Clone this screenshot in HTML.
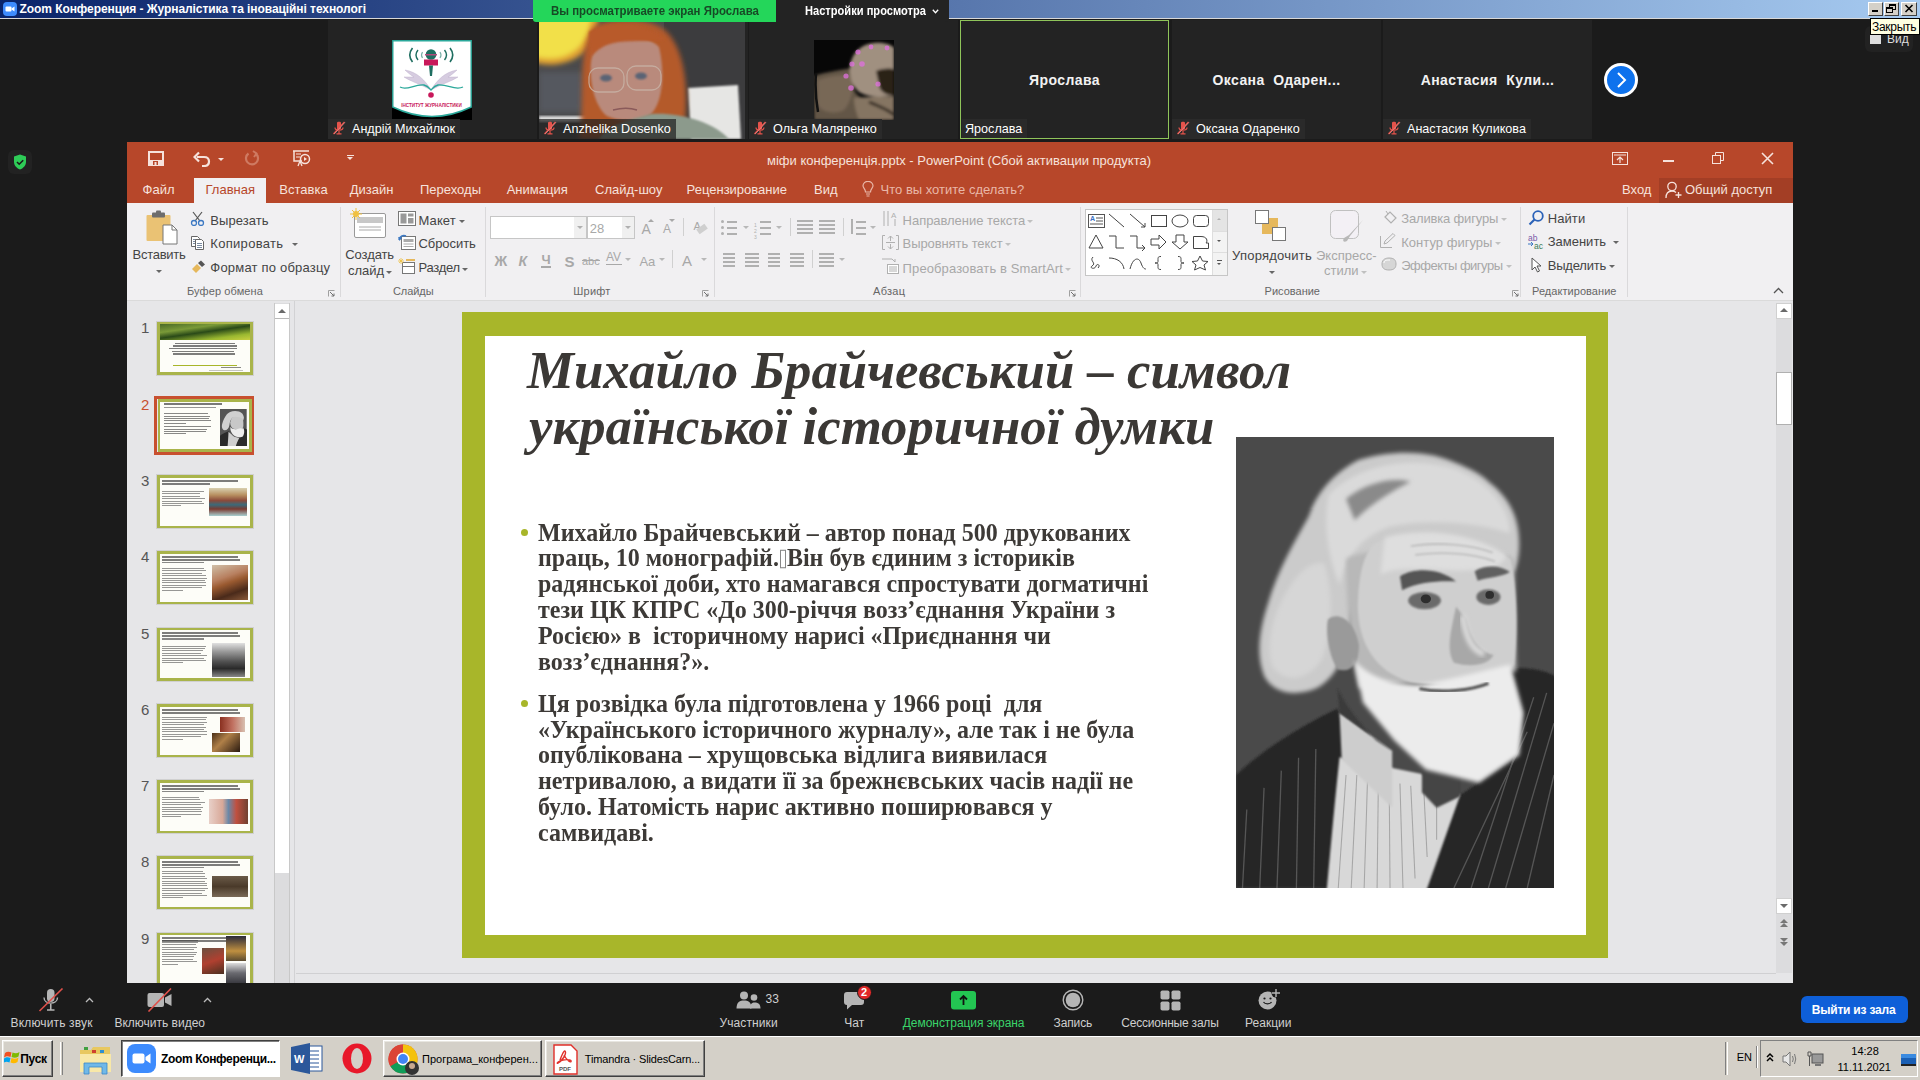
<!DOCTYPE html>
<html><head><meta charset="utf-8">
<style>
*{box-sizing:border-box;margin:0;padding:0}
html,body{width:1920px;height:1080px;overflow:hidden;background:#1b1b1b;font-family:"Liberation Sans",sans-serif;position:relative}
.a{position:absolute}
.t{position:absolute;white-space:nowrap;line-height:1}
/* title bar */
#tb{left:0;top:0;width:1920px;height:18px;background:linear-gradient(90deg,#0a246a 0%,#a6caf0 100%)}
#tbl{left:0;top:18px;width:1920px;height:1px;background:#d8d8d8}
/* tiles */
.tile{position:absolute;top:20px;height:119px;width:209px;background:#232323;overflow:hidden}
.lbl{position:absolute;left:0;bottom:0;height:20px;background:#2a2a2a;color:#fff;font-size:12.6px;line-height:20px;padding:0 5px 0 4px;white-space:nowrap}
.mute{display:inline-block;width:14px;height:14px;vertical-align:-2px;margin-right:6px}
.bn{position:absolute;left:0;right:0;top:52.7px;text-align:center;color:#f2f2f2;font-weight:bold;font-size:14px;letter-spacing:0.4px;white-space:nowrap;line-height:1}
/* ppt */
#ppt{left:127px;top:142px;width:1666px;height:841px;background:#e6e6e8;overflow:hidden}
#ptitle{left:0;top:0;width:1666px;height:35px;background:#b7472a}
#ptabs{left:0;top:35px;width:1666px;height:26px;background:#b7472a}
#ribbon{left:0;top:61px;width:1666px;height:98px;background:#f1f0f2;border-bottom:1px solid #dadada}
.tab{position:absolute;top:41px;color:#fbe9e4;font-size:13px;white-space:nowrap}
.rb{position:absolute;color:#444;font-size:13px;white-space:nowrap;line-height:1}
.gl{position:absolute;color:#666;font-size:12px;white-space:nowrap;line-height:1}
.sep{position:absolute;width:1px;background:#d9d8da}
/* zoom toolbar */
.zb{position:absolute;color:#d6d6d6;font-size:12px;white-space:nowrap;line-height:1}
/* taskbar */
#task{left:0;top:1036px;width:1920px;height:44px;background:#d4d0c8;border-top:1px solid #fff}
.tbtn{position:absolute;top:4px;height:37px;border:1px solid;border-color:#fff #404040 #404040 #fff;box-shadow:inset -1px -1px #808080;background:#d4d0c8;font-size:13px;color:#000;white-space:nowrap}
</style></head><body>

<!-- Windows title bar -->
<div class="a" id="tb"></div>
<div class="a" id="tbl"></div>


<!-- title bar content -->
<svg class="a" style="left:3px;top:2px" width="14" height="14" viewBox="0 0 14 14"><rect x="0" y="0" width="14" height="14" rx="4" fill="#3d8bfd"/><rect x="2.5" y="4.5" width="6" height="5" rx="1" fill="#fff"/><path d="M8.5,6.5 L11.5,4.5 V9.5 L8.5,7.5 Z" fill="#fff"/></svg>
<div class="t" style="left:19.5px;top:2.5px;font-size:12px;font-weight:bold;color:#fff;letter-spacing:-0.07px">Zoom Конференция - Журналістика та іноваційні технологі</div>
<!-- green banner -->
<div class="a" style="left:533px;top:0;width:243px;height:22px;background:#24d65a;border-bottom-left-radius:3px;z-index:5"></div>
<div class="t" style="z-index:6;left:551px;top:4px;font-size:13px;font-weight:bold;color:#174a26;transform:scaleX(0.88);transform-origin:0 0">Вы просматриваете экран Ярослава</div>
<div class="a" style="left:776px;top:0;width:173px;height:22px;background:#232323;border-bottom-right-radius:4px;z-index:5"></div>
<div class="t" style="z-index:6;left:805px;top:5px;font-size:12px;font-weight:bold;color:#fff;transform:scaleX(0.925);transform-origin:0 0">Настройки просмотра</div>
<svg class="a" style="left:932px;top:9px;z-index:6" width="7" height="5" viewBox="0 0 7 5"><path d="M0.8,0.8 L3.5,3.8 L6.2,0.8" fill="none" stroke="#fff" stroke-width="1.3"/></svg>
<!-- window buttons -->
<div class="a" style="left:1868px;top:2px;width:15px;height:14px;background:#d4d0c8;border:1px solid;border-color:#fff #404040 #404040 #fff"></div>
<div class="a" style="left:1872px;top:10px;width:6px;height:2px;background:#000"></div>
<div class="a" style="left:1884px;top:2px;width:15px;height:14px;background:#d4d0c8;border:1px solid;border-color:#fff #404040 #404040 #fff"></div>
<svg class="a" style="left:1886px;top:4px" width="10" height="9" viewBox="0 0 10 9"><rect x="3.5" y="0.5" width="6" height="5" fill="none" stroke="#000"/><path d="M3.5,1.5 H9.5" stroke="#000"/><rect x="0.5" y="3.5" width="6" height="5" fill="#d4d0c8" stroke="#000"/><path d="M0.5,4.5 H6.5" stroke="#000"/></svg>
<div class="a" style="left:1901px;top:2px;width:16px;height:14px;background:#d4d0c8;border:1px solid;border-color:#fff #404040 #404040 #fff"></div>
<svg class="a" style="left:1904px;top:4px" width="10" height="9" viewBox="0 0 10 9"><path d="M1.5,1 L8.5,8 M8.5,1 L1.5,8" stroke="#000" stroke-width="1.6"/></svg>
<!-- Вид -->
<div class="a" style="left:1865px;top:26px;width:48px;height:26px;background:#222;border-radius:6px"></div>
<div class="a" style="left:1870px;top:35px;width:11px;height:9px;background:#ddd"></div>
<div class="t" style="left:1887px;top:33px;font-size:12px;color:#ddd">Вид</div>
<!-- tooltip -->
<div class="a" style="left:1870px;top:18px;width:50px;height:17px;background:#ffffe1;border:1px solid #000"></div>
<div class="t" style="left:1872px;top:20.5px;font-size:12px;color:#000;letter-spacing:-0.3px">Закрыть</div>
<!-- next arrow -->
<svg class="a" style="left:1604px;top:63px" width="34" height="34" viewBox="0 0 34 34"><circle cx="17" cy="17" r="15.5" fill="#0e72ed" stroke="#fff" stroke-width="3"/><path d="M14,10 L21,17 L14,24" fill="none" stroke="#fff" stroke-width="2"/></svg>
<!-- shield -->
<div class="a" style="left:8px;top:150px;width:24px;height:24px;background:#222;border-radius:6px"></div>
<svg class="a" style="left:13px;top:154px" width="14" height="16" viewBox="0 0 14 16"><path d="M7,0.5 L13,2.5 V8 C13,11.5 10,14.5 7,15.5 C4,14.5 1,11.5 1,8 V2.5 Z" fill="#2ecc57"/><path d="M4,8 L6.2,10.2 L10.2,6.2" fill="none" stroke="#1a1a1a" stroke-width="1.6"/></svg>

<!-- Zoom participants strip -->
<div class="tile" style="left:328px"><svg class="a" style="left:64px;top:20px" width="80" height="80" viewBox="0 0 80 80"><rect width="80" height="80" fill="#000"/>
<path d="M0.8,0.8 H79.2 V67 Q40,86 0.8,67 Z" fill="#fff" stroke="#2aa89a" stroke-width="1.4"/>
<path d="M20.5,8 Q15,15 20.5,22" fill="none" stroke="#1e6e60" stroke-width="1.6"/><path d="M26,10 Q22,15 26,20" fill="none" stroke="#1e6e60" stroke-width="1.4"/><path d="M30.5,12 Q28.5,15 30.5,18" fill="none" stroke="#7ab0a8" stroke-width="1.2"/>
<path d="M58,8 Q63.5,15 58,22" fill="none" stroke="#1e6e60" stroke-width="1.6"/><path d="M52.5,10 Q56.5,15 52.5,20" fill="none" stroke="#1e6e60" stroke-width="1.4"/><path d="M48,12 Q50,15 48,18" fill="none" stroke="#7ab0a8" stroke-width="1.2"/>
<circle cx="39" cy="14.5" r="5.3" fill="#1e6e60"/><rect x="33" y="14" width="12" height="1.5" fill="#b04a7a"/>
<rect x="32" y="19.5" width="14" height="6" fill="#c8185a"/><path d="M37,25.5 H41 L40,36 H38 Z" fill="#1e6e60"/>
<path d="M39,50 C33,40 25,32 13,30 C16,33 20,36 22,37 C18,37 14,37 12,37 C18,41 28,44 39,50 Z" fill="#d6cce0" stroke="#b8a8c8" stroke-width="0.4"/>
<path d="M39,50 C45,40 53,32 65,30 C62,33 58,36 56,37 C60,37 64,37 66,37 C60,41 50,44 39,50 Z" fill="#d6cce0" stroke="#b8a8c8" stroke-width="0.4"/>
<path d="M8,47 C15,51 22,44 32,45 C36,46 38,49 39,50 C40,49 42,46 46,45 C56,44 63,51 71,47" fill="none" stroke="#2aa89a" stroke-width="1.3"/>
<circle cx="39" cy="55" r="2.8" fill="#c8185a"/>
<text x="39.5" y="67" font-size="4.6" font-weight="bold" fill="#c8185a" text-anchor="middle" font-family="Liberation Sans">ІНСТИТУТ ЖУРНАЛІСТИКИ</text>
</svg><div class="lbl"><svg class="mute" viewBox="0 0 14 14"><path d="M5,1.5 C5,0.5 9,0.5 9,1.5 V7.5 C9,9 5,9 5,7.5 Z" fill="#e5534b"/><path d="M3,6.5 C3,10 11,10 11,6.5" fill="none" stroke="#e5534b" stroke-width="1.2"/><path d="M7,10 V12.5 M4.5,12.8 H9.5" stroke="#e5534b" stroke-width="1.2"/><path d="M1.5,13 L12.5,1" stroke="#e5534b" stroke-width="1.4"/><path d="M2.2,13 L13,1.3" stroke="#f0b0b0" stroke-width="0.5"/></svg>Андрій Михайлюк</div></div>
<div class="tile" style="left:539px"><svg class="a" style="left:0;top:2px" width="206" height="117" viewBox="0 0 206 117"><defs><filter id="vb"><feGaussianBlur stdDeviation="2.5"/></filter><filter id="vb2"><feGaussianBlur stdDeviation="1.2"/></filter></defs>
<rect width="206" height="117" fill="#4a4a4c"/>
<rect x="125" y="0" width="81" height="117" fill="#3c3c3e"/>
<g filter="url(#vb)">
<path d="M-5,-5 L60,-5 C58,20 45,38 20,42 C8,44 0,42 -5,40 Z" fill="#e0a030"/>
<path d="M-5,-5 L52,-5 C50,16 40,32 18,36 C8,37 0,36 -5,34 Z" fill="#f2e048"/>
<rect x="0" y="50" width="45" height="40" fill="#5a5e66" opacity="0.7"/>
</g>
<path d="M0,94 L55,94 L55,100 L0,100 Z" fill="#d8d8d8" filter="url(#vb2)"/>
<path d="M149,66 L199,63 L202,117 L152,117 Z" fill="#e6e6e4" filter="url(#vb2)"/>
<path d="M40,117 C46,80 38,35 52,8 C62,-6 118,-8 132,15 C150,40 148,85 146,100 C140,112 130,117 130,117 Z" fill="#b45a2c" filter="url(#vb)"/>
<path d="M55,22 C70,12 105,10 120,25 C126,50 124,80 112,92 C100,100 80,100 68,94 C56,85 50,60 52,40 Z" fill="#b98a7c" filter="url(#vb2)"/>
<path d="M50,10 C65,0 110,0 126,18 C115,20 95,18 80,20 C65,22 58,28 52,35 Z" fill="#b85a2a" filter="url(#vb2)"/>
<rect x="50" y="46" width="35" height="24" rx="9" fill="none" stroke="#c8b4a8" stroke-width="1.3" opacity="0.8"/>
<rect x="88" y="44" width="34" height="24" rx="9" fill="none" stroke="#c8b4a8" stroke-width="1.3" opacity="0.8"/>
<ellipse cx="67" cy="56" rx="6" ry="3.5" fill="#5a6474" filter="url(#vb2)"/>
<ellipse cx="102" cy="54" rx="6" ry="3.5" fill="#5a6474" filter="url(#vb2)"/>
<path d="M74,88 C82,86 92,86 98,88" stroke="#8a5a5a" stroke-width="1.5" fill="none"/>
<path d="M60,117 C70,102 90,98 112,92 C140,90 175,100 190,117 Z" fill="#8c9a8c" filter="url(#vb2)"/>
</svg><div class="lbl" style="background:rgba(30,30,30,0.7)"><svg class="mute" viewBox="0 0 14 14"><path d="M5,1.5 C5,0.5 9,0.5 9,1.5 V7.5 C9,9 5,9 5,7.5 Z" fill="#e5534b"/><path d="M3,6.5 C3,10 11,10 11,6.5" fill="none" stroke="#e5534b" stroke-width="1.2"/><path d="M7,10 V12.5 M4.5,12.8 H9.5" stroke="#e5534b" stroke-width="1.2"/><path d="M1.5,13 L12.5,1" stroke="#e5534b" stroke-width="1.4"/><path d="M2.2,13 L13,1.3" stroke="#f0b0b0" stroke-width="0.5"/></svg>Anzhelika Dosenko</div></div>
<div class="tile" style="left:749px"><svg class="a" style="left:65px;top:20px" width="80" height="80" viewBox="0 0 80 80"><defs><filter id="ob"><feGaussianBlur stdDeviation="1.8"/></filter></defs>
<rect width="80" height="80" fill="#070707"/>
<g filter="url(#ob)">
<path d="M0,36 C12,32 28,30 38,28 L40,50 C45,60 55,62 80,58 L80,80 L0,80 Z" fill="#645646"/>
<path d="M4,40 C15,36 30,34 38,36 C40,48 38,60 30,70 C20,75 8,72 4,65 Z" fill="#786856"/>
<path d="M36,26 C38,12 48,4 60,3 C70,2 78,5 80,8 L80,55 C70,58 55,58 45,52 C38,46 35,36 36,26 Z" fill="#a09080"/>
<path d="M62,31 C70,28 78,28 80,30 L80,55 C75,56 70,54 66,49 Z" fill="#2a2018"/>
<path d="M40,58 C55,56 70,58 80,56 L80,80 L45,80 C42,72 40,65 40,58 Z" fill="#857562"/>
<path d="M55,62 C65,66 75,70 80,75" stroke="#3a3028" stroke-width="3" fill="none"/>
</g>
<path d="M2,34 C1,45 2,60 4,72" stroke="#111" stroke-width="2.5" fill="none"/>
<g fill="#e070e0" opacity="0.75"><circle cx="44" cy="12" r="2.6"/><circle cx="57" cy="7" r="2.4"/><circle cx="73" cy="8" r="2.4"/><circle cx="38" cy="24" r="2.6"/><circle cx="48" cy="24" r="2.8"/><circle cx="32" cy="36" r="2.6"/><circle cx="37" cy="48" r="2.8"/><circle cx="64" cy="44" r="2.6"/></g>
</svg><div class="lbl"><svg class="mute" viewBox="0 0 14 14"><path d="M5,1.5 C5,0.5 9,0.5 9,1.5 V7.5 C9,9 5,9 5,7.5 Z" fill="#e5534b"/><path d="M3,6.5 C3,10 11,10 11,6.5" fill="none" stroke="#e5534b" stroke-width="1.2"/><path d="M7,10 V12.5 M4.5,12.8 H9.5" stroke="#e5534b" stroke-width="1.2"/><path d="M1.5,13 L12.5,1" stroke="#e5534b" stroke-width="1.4"/><path d="M2.2,13 L13,1.3" stroke="#f0b0b0" stroke-width="0.5"/></svg>Ольга Маляренко</div></div>
<div class="tile" style="left:960px;border:1px solid #8fc45a;background:#232323"><div class="bn" style="top:51.7px">Ярослава</div><div class="lbl" style="left:1px;bottom:-1px;padding-left:3px;background:#2a2a2a">Ярослава</div></div>
<div class="tile" style="left:1172px"><div class="bn">Оксана&nbsp; Одарен...</div><div class="lbl"><svg class="mute" viewBox="0 0 14 14"><path d="M5,1.5 C5,0.5 9,0.5 9,1.5 V7.5 C9,9 5,9 5,7.5 Z" fill="#e5534b"/><path d="M3,6.5 C3,10 11,10 11,6.5" fill="none" stroke="#e5534b" stroke-width="1.2"/><path d="M7,10 V12.5 M4.5,12.8 H9.5" stroke="#e5534b" stroke-width="1.2"/><path d="M1.5,13 L12.5,1" stroke="#e5534b" stroke-width="1.4"/><path d="M2.2,13 L13,1.3" stroke="#f0b0b0" stroke-width="0.5"/></svg>Оксана Одаренко</div></div>
<div class="tile" style="left:1383px"><div class="bn">Анастасия&nbsp; Кули...</div><div class="lbl"><svg class="mute" viewBox="0 0 14 14"><path d="M5,1.5 C5,0.5 9,0.5 9,1.5 V7.5 C9,9 5,9 5,7.5 Z" fill="#e5534b"/><path d="M3,6.5 C3,10 11,10 11,6.5" fill="none" stroke="#e5534b" stroke-width="1.2"/><path d="M7,10 V12.5 M4.5,12.8 H9.5" stroke="#e5534b" stroke-width="1.2"/><path d="M1.5,13 L12.5,1" stroke="#e5534b" stroke-width="1.4"/><path d="M2.2,13 L13,1.3" stroke="#f0b0b0" stroke-width="0.5"/></svg>Анастасия Куликова</div></div>


<!-- PowerPoint -->
<div class="a" id="ppt">
  <div class="a" id="ptitle"></div>
  <div class="a" id="ptabs"></div>
  <div class="a" id="ribbon"></div>
</div>


<!-- PPT header -->
<svg class="a" style="left:148px;top:151px" width="16" height="15" viewBox="0 0 16 15"><path d="M1,1 H15 V14 H1 Z" fill="none" stroke="#f6e2dc" stroke-width="2"/><rect x="1" y="9" width="14" height="5" fill="#f6e2dc"/><rect x="5" y="10" width="5" height="4" fill="#b7472a"/><rect x="6.5" y="11" width="2" height="3" fill="#f6e2dc"/></svg>
<svg class="a" style="left:193px;top:150px" width="18" height="17" viewBox="0 0 18 17"><path d="M4,7 H11 C14.5,7 16,9 16,11.5 C16,14 14.5,16 11,16 H9" fill="none" stroke="#f6e2dc" stroke-width="2.2"/><path d="M6,2.5 L1.5,7 L6,11.5" fill="none" stroke="#f6e2dc" stroke-width="2.2"/></svg>
<div class="a" style="left:218px;top:158px;width:0;height:0;border-left:3px solid transparent;border-right:3px solid transparent;border-top:3px solid #f6e2dc"></div>

<svg class="a" style="left:244px;top:150px" width="16" height="16" viewBox="0 0 16 16"><path d="M11.5,3.5 A6,6 0 1 1 4.5,3.5" fill="none" stroke="#cf7a62" stroke-width="2.2"/><path d="M9,1 L12.5,3.5 L10,7" fill="none" stroke="#cf7a62" stroke-width="2"/></svg>
<svg class="a" style="left:292px;top:150px" width="19" height="17" viewBox="0 0 19 17"><path d="M1,1 H17" stroke="#f6e2dc" stroke-width="1.5"/><path d="M2,1 V11 H10" fill="none" stroke="#f6e2dc" stroke-width="1.5"/><path d="M4,4 H9 M4,7 H8" stroke="#f6e2dc" stroke-width="1.2"/><circle cx="13" cy="9" r="4.5" fill="none" stroke="#f6e2dc" stroke-width="1.5"/><path d="M12,7 L15,9 L12,11Z" fill="#f6e2dc"/><path d="M6,16 L8,11 L10,16" fill="none" stroke="#f6e2dc" stroke-width="1.3"/></svg>
<div class="a" style="left:347px;top:155px;width:7px;height:1px;background:#f6e2dc"></div>
<div class="a" style="left:347.0px;top:157px;width:0;height:0;border-left:3.5px solid transparent;border-right:3.5px solid transparent;border-top:3.5px solid #f6e2dc"></div>
<div class="t" style="left:767px;top:153.7px;font-size:13px;color:#f6e2dc;">міфи конференція.pptx - PowerPoint (Сбой активации продукта)</div>
<svg class="a" style="left:1612px;top:152px" width="16" height="13" viewBox="0 0 16 13"><rect x="0.5" y="0.5" width="15" height="12" fill="none" stroke="#f6e2dc"/><path d="M2,3 H14" stroke="#f6e2dc"/><path d="M8,11 V5 M5,8 L8,5 L11,8" fill="none" stroke="#f6e2dc" stroke-width="1.2"/></svg>
<div class="a" style="left:1663px;top:160px;width:11px;height:1.5px;background:#f6e2dc"></div>
<svg class="a" style="left:1712px;top:152px" width="12" height="12" viewBox="0 0 12 12"><rect x="0.5" y="3.5" width="8" height="8" fill="none" stroke="#f6e2dc"/><path d="M3.5,3.5 V0.5 H11.5 V8.5 H8.5" fill="none" stroke="#f6e2dc"/></svg>
<svg class="a" style="left:1761px;top:152px" width="13" height="13" viewBox="0 0 13 13"><path d="M1,1 L12,12 M12,1 L1,12" stroke="#f6e2dc" stroke-width="1.6"/></svg>
<div class="a" style="left:194px;top:178px;width:72px;height:25px;background:#f1f0f2"></div>
<div class="t" style="left:142.6px;top:183.2px;font-size:13px;color:#f6e2dc;">Файл</div>
<div class="t" style="left:279.3px;top:183.2px;font-size:13px;color:#f6e2dc;">Вставка</div>
<div class="t" style="left:349.7px;top:183.2px;font-size:13px;color:#f6e2dc;">Дизайн</div>
<div class="t" style="left:420px;top:183.2px;font-size:13px;color:#f6e2dc;">Переходы</div>
<div class="t" style="left:506.7px;top:183.2px;font-size:13px;color:#f6e2dc;">Анимация</div>
<div class="t" style="left:595px;top:183.2px;font-size:13px;color:#f6e2dc;">Слайд-шоу</div>
<div class="t" style="left:686.6px;top:183.2px;font-size:13px;color:#f6e2dc;">Рецензирование</div>
<div class="t" style="left:814px;top:183.2px;font-size:13px;color:#f6e2dc;">Вид</div>
<div class="t" style="left:205.5px;top:183.2px;font-size:13px;color:#b7472a;">Главная</div>
<svg class="a" style="left:862px;top:181px" width="12" height="17" viewBox="0 0 12 17"><path d="M3.5,11 C3.5,8 1,7 1,4.8 A5,4.5 0 0 1 11,4.8 C11,7 8.5,8 8.5,11 Z" fill="none" stroke="#e9b7a8" stroke-width="1.2"/><path d="M4,13 H8 M4.5,15 H7.5" stroke="#e9b7a8" stroke-width="1.2"/></svg>
<div class="t" style="left:880.6px;top:183.2px;font-size:13px;color:#e9b7a8;">Что вы хотите сделать?</div>
<div class="t" style="left:1622px;top:183.2px;font-size:13px;color:#f6e2dc;">Вход</div>
<div class="a" style="left:1659px;top:178px;width:134px;height:25px;background:#a33e25"></div>
<svg class="a" style="left:1665px;top:181px" width="18" height="18" viewBox="0 0 18 18"><circle cx="7" cy="5.5" r="4.2" fill="none" stroke="#f6e2dc" stroke-width="1.3"/><path d="M1,17 C1,12 3.5,10 7,10 C9,10 10,10.5 11,11.5" fill="none" stroke="#f6e2dc" stroke-width="1.3"/><path d="M13.5,11 V17 M10.5,14 H16.5" stroke="#f6e2dc" stroke-width="1.3"/></svg>
<div class="t" style="left:1685px;top:183.2px;font-size:13px;color:#f6e2dc;">Общий доступ</div>

<!-- ribbon -->
<svg class="a" style="left:146px;top:210px" width="32" height="35" viewBox="0 0 32 35"><rect x="0.5" y="5" width="24" height="26" rx="1" fill="#eac274"/><rect x="6" y="2.5" width="13" height="5" rx="1" fill="#6d6d6d"/><rect x="10" y="0.5" width="5" height="4" rx="1" fill="#6d6d6d"/><path d="M17,15 H26 L31,20 V34 H17 Z" fill="#fff" stroke="#777" stroke-width="1"/><path d="M26,15 V20 H31" fill="none" stroke="#777"/></svg>
<div class="t" style="left:132.5px;top:248.2px;font-size:13px;color:#444;letter-spacing:-0.26px">Вставить</div>
<div class="a" style="left:156.0px;top:269.5px;width:0;height:0;border-left:3px solid transparent;border-right:3px solid transparent;border-top:3px solid #666"></div>
<svg class="a" style="left:190px;top:211px" width="15" height="15" viewBox="0 0 15 15"><path d="M3,1 L10,10 M12,1 L5,10" stroke="#555" stroke-width="1.2"/><circle cx="4" cy="12" r="2.5" fill="none" stroke="#3b78c3" stroke-width="1.3"/><circle cx="11" cy="12" r="2.5" fill="none" stroke="#3b78c3" stroke-width="1.3"/></svg>
<div class="t" style="left:210.3px;top:213.6px;font-size:13px;color:#444;letter-spacing:0.05px">Вырезать</div>
<svg class="a" style="left:190px;top:235px" width="15" height="16" viewBox="0 0 15 16"><path d="M1.5,1.5 H7.5 L9.5,3.5 V11.5 H1.5 Z" fill="#fff" stroke="#666"/><path d="M3,4.5 H7 M3,6.5 H7 M3,8.5 H5" stroke="#7a8aa0"/><path d="M5.5,4.5 H11.5 L13.5,6.5 V14.5 H5.5 Z" fill="#fff" stroke="#666"/><path d="M7,8.5 H12 M7,10.5 H12 M7,12.5 H12" stroke="#7a8aa0"/></svg>
<div class="t" style="left:210.3px;top:237.0px;font-size:13px;color:#444;letter-spacing:0.3px">Копировать</div>
<div class="a" style="left:291.7px;top:242.5px;width:0;height:0;border-left:3px solid transparent;border-right:3px solid transparent;border-top:3px solid #666"></div>
<svg class="a" style="left:191px;top:260px" width="15" height="14" viewBox="0 0 15 14"><path d="M1,9 L6,4 L10,8 L5,13 Z" fill="#e6b85c"/><path d="M7,3 L10,0.5 L14,4.5 L11,7 Z" fill="#555"/></svg>
<div class="t" style="left:210.3px;top:261.4px;font-size:13px;color:#444;letter-spacing:0.2px">Формат по образцу</div>
<div class="t" style="left:187px;top:286.4px;font-size:11px;color:#666;letter-spacing:0.1px">Буфер обмена</div>
<svg class="a" style="left:328px;top:290px" width="7" height="7" viewBox="0 0 7 7"><path d="M0.5,6.5 V0.5 H6.5" fill="none" stroke="#a0a0a0"/><path d="M2,2 L6,6 M6,3.5 V6 H3.5" fill="none" stroke="#707070"/></svg>
<div class="a" style="left:340px;top:207px;width:1px;height:90px;background:#dad9db"></div>
<svg class="a" style="left:350px;top:208px" width="38" height="31" viewBox="0 0 38 31"><rect x="4.5" y="5.5" width="31" height="24" rx="1.5" fill="#fff" stroke="#999"/><rect x="7" y="9" width="26" height="6" fill="#c8c8c8"/><path d="M9,19 H31 M9,22 H31" stroke="#aaa"/><circle cx="6" cy="6" r="3" fill="#f0c040"/><path d="M6,0 V12 M0,6 H12 M2,2 L10,10 M10,2 L2,10" stroke="#f0c040" stroke-width="1"/></svg>
<div class="t" style="left:345.3px;top:248.2px;font-size:13px;color:#444;letter-spacing:-0.1px">Создать</div>
<div class="t" style="left:348px;top:264.2px;font-size:13px;color:#444;">слайд</div>
<div class="a" style="left:385.5px;top:270.5px;width:0;height:0;border-left:3px solid transparent;border-right:3px solid transparent;border-top:3px solid #666"></div>
<svg class="a" style="left:398px;top:211px" width="18" height="15" viewBox="0 0 18 15"><rect x="0.5" y="0.5" width="17" height="14" fill="#fff" stroke="#777"/><rect x="2.5" y="2.5" width="6" height="10" fill="#999"/><rect x="10" y="2.5" width="5.5" height="3" fill="#999"/><rect x="10" y="7" width="5.5" height="5.5" fill="#999"/></svg>
<div class="t" style="left:418.5px;top:213.6px;font-size:13px;color:#444;letter-spacing:0.1px">Макет</div>
<div class="a" style="left:458.6px;top:219.5px;width:0;height:0;border-left:3px solid transparent;border-right:3px solid transparent;border-top:3px solid #666"></div>
<svg class="a" style="left:398px;top:234px" width="18" height="16" viewBox="0 0 18 16"><rect x="3.5" y="2.5" width="14" height="13" fill="#fff" stroke="#777"/><rect x="5.5" y="5" width="10" height="3" fill="#aaa"/><path d="M5.5,10 H15.5 M5.5,12.5 H15.5" stroke="#aaa"/><path d="M1,6 A5,5 0 0 1 8,2" fill="none" stroke="#3b78c3" stroke-width="1.5"/><path d="M0,3 L1.5,7 L4,4" fill="#3b78c3"/></svg>
<div class="t" style="left:418.5px;top:237.0px;font-size:13px;color:#444;letter-spacing:-0.07px">Сбросить</div>
<svg class="a" style="left:398px;top:258px" width="18" height="16" viewBox="0 0 18 16"><rect x="4.5" y="4.5" width="12" height="11" fill="#fff" stroke="#777"/><path d="M4.5,8.5 H16.5" stroke="#777"/><rect x="8" y="1" width="9" height="2" fill="#e6b85c"/><path d="M3,0 V6 M0,3 H6 M1,1 L5,5 M5,1 L1,5" stroke="#f0c040" stroke-width="0.8"/></svg>
<div class="t" style="left:418.5px;top:261.4px;font-size:13px;color:#444;letter-spacing:-0.28px">Раздел</div>
<div class="a" style="left:462.3px;top:267.5px;width:0;height:0;border-left:3px solid transparent;border-right:3px solid transparent;border-top:3px solid #666"></div>
<div class="t" style="left:393px;top:286.4px;font-size:11px;color:#666;letter-spacing:-0.08px">Слайды</div>
<div class="a" style="left:485px;top:207px;width:1px;height:90px;background:#dad9db"></div>
<div class="a" style="left:490px;top:216px;width:97px;height:23px;background:#fff;border:1px solid #c6c6c6"></div>
<div class="a" style="left:574px;top:217px;width:12px;height:21px;background:#f0f0f0"></div>
<div class="a" style="left:577.0px;top:226.0px;width:0;height:0;border-left:3px solid transparent;border-right:3px solid transparent;border-top:3px solid #b0b0b0"></div>
<div class="a" style="left:587px;top:216px;width:48px;height:23px;background:#fff;border:1px solid #c6c6c6"></div>
<div class="a" style="left:622px;top:217px;width:12px;height:21px;background:#f0f0f0"></div>
<div class="a" style="left:625.0px;top:226.0px;width:0;height:0;border-left:3px solid transparent;border-right:3px solid transparent;border-top:3px solid #b0b0b0"></div>
<div class="t" style="left:589.8px;top:221.7px;font-size:13px;color:#a8a8a8;">28</div>
<div class="t" style="left:641.5px;top:221.7px;font-size:14px;color:#a8a8a8;">A</div>
<div class="a" style="left:648px;top:219px;width:0;height:0;border-left:3px solid transparent;border-right:3px solid transparent;border-bottom:3px solid #a8a8a8"></div>
<div class="t" style="left:663px;top:223.3px;font-size:12px;color:#a8a8a8;">A</div>
<div class="a" style="left:669px;top:219px;width:0;height:0;border-left:3px solid transparent;border-right:3px solid transparent;border-top:3px solid #a8a8a8"></div>
<div class="a" style="left:683px;top:218px;width:1px;height:18px;background:#d0d0d0"></div>
<div class="t" style="left:693.5px;top:220.9px;font-size:11px;color:#a8a8a8;">A</div>
<div class="a" style="left:697px;top:226px;width:10px;height:6px;background:#cfcfcf;transform:rotate(-35deg)"></div>
<div class="t" style="left:494.6px;top:254.4px;font-size:14px;color:#a8a8a8;font-weight:bold">Ж</div>
<div class="t" style="left:518.5px;top:254.4px;font-size:14px;color:#a8a8a8;font-weight:bold;font-style:italic">К</div>
<div class="t" style="left:541.5px;top:253.2px;font-size:13px;color:#a8a8a8;font-weight:bold">Ч</div>
<div class="a" style="left:541px;top:266px;width:10px;height:1.5px;background:#a8a8a8"></div>
<div class="t" style="left:564.4px;top:253.5px;font-size:15px;color:#a8a8a8;font-weight:bold">S</div>
<div class="t" style="left:582px;top:255.9px;font-size:11px;color:#a8a8a8;">abc</div>
<div class="a" style="left:582px;top:260px;width:18px;height:1px;background:#a8a8a8"></div>
<div class="t" style="left:606px;top:251.0px;font-size:12px;color:#a8a8a8;">AV</div>
<div class="a" style="left:606px;top:264px;width:16px;height:1px;background:#a8a8a8"></div>
<div class="a" style="left:625.0px;top:258.0px;width:0;height:0;border-left:3px solid transparent;border-right:3px solid transparent;border-top:3px solid #b8b8b8"></div>
<div class="t" style="left:639.4px;top:255.2px;font-size:13px;color:#a8a8a8;">Aa</div>
<div class="a" style="left:658.5px;top:258.0px;width:0;height:0;border-left:3px solid transparent;border-right:3px solid transparent;border-top:3px solid #b8b8b8"></div>
<div class="a" style="left:672px;top:250px;width:1px;height:18px;background:#d0d0d0"></div>
<div class="t" style="left:682px;top:252.5px;font-size:15px;color:#a8a8a8;">A</div>
<div class="a" style="left:701.0px;top:258.0px;width:0;height:0;border-left:3px solid transparent;border-right:3px solid transparent;border-top:3px solid #b8b8b8"></div>
<div class="t" style="left:573.3px;top:286.4px;font-size:11px;color:#666;letter-spacing:0.2px">Шрифт</div>
<svg class="a" style="left:702px;top:290px" width="7" height="7" viewBox="0 0 7 7"><path d="M0.5,6.5 V0.5 H6.5" fill="none" stroke="#a0a0a0"/><path d="M2,2 L6,6 M6,3.5 V6 H3.5" fill="none" stroke="#707070"/></svg>
<div class="a" style="left:714px;top:207px;width:1px;height:90px;background:#dad9db"></div>
<div class="a" style="left:721px;top:220px;width:3px;height:3px;border-radius:50%;background:#b0b0b0"></div>
<div class="a" style="left:721px;top:226px;width:3px;height:3px;border-radius:50%;background:#b0b0b0"></div>
<div class="a" style="left:721px;top:232px;width:3px;height:3px;border-radius:50%;background:#b0b0b0"></div>
<div class="a" style="left:727px;top:221px;width:10px;height:1.5px;background:#b0b0b0"></div>
<div class="a" style="left:727px;top:227px;width:10px;height:1.5px;background:#b0b0b0"></div>
<div class="a" style="left:727px;top:233px;width:10px;height:1.5px;background:#b0b0b0"></div>
<div class="a" style="left:742.6px;top:226.0px;width:0;height:0;border-left:3px solid transparent;border-right:3px solid transparent;border-top:3px solid #b8b8b8"></div>
<div class="a" style="left:760px;top:221px;width:11px;height:1.5px;background:#b0b0b0"></div>
<div class="a" style="left:760px;top:227px;width:11px;height:1.5px;background:#b0b0b0"></div>
<div class="a" style="left:760px;top:233px;width:11px;height:1.5px;background:#b0b0b0"></div>
<div class="t" style="left:754px;top:221.8px;font-size:5px;color:#b0b0b0;"><span style="font-size:5px;line-height:6px;display:block">1<br>2<br>3</span></div>
<div class="a" style="left:776.4px;top:226.0px;width:0;height:0;border-left:3px solid transparent;border-right:3px solid transparent;border-top:3px solid #b8b8b8"></div>
<div class="a" style="left:790px;top:218px;width:1px;height:18px;background:#d0d0d0"></div>
<div class="a" style="left:797px;top:220px;width:16px;height:1.5px;background:#b0b0b0"></div>
<div class="a" style="left:797px;top:224px;width:16px;height:1.5px;background:#b0b0b0"></div>
<div class="a" style="left:797px;top:228px;width:16px;height:1.5px;background:#b0b0b0"></div>
<div class="a" style="left:797px;top:232px;width:16px;height:1.5px;background:#b0b0b0"></div>
<div class="a" style="left:819px;top:220px;width:16px;height:1.5px;background:#b0b0b0"></div>
<div class="a" style="left:819px;top:224px;width:16px;height:1.5px;background:#b0b0b0"></div>
<div class="a" style="left:819px;top:228px;width:16px;height:1.5px;background:#b0b0b0"></div>
<div class="a" style="left:819px;top:232px;width:16px;height:1.5px;background:#b0b0b0"></div>
<div class="a" style="left:843px;top:218px;width:1px;height:18px;background:#d0d0d0"></div>
<div class="a" style="left:856px;top:221px;width:10px;height:1.5px;background:#b0b0b0"></div>
<div class="a" style="left:856px;top:227px;width:10px;height:1.5px;background:#b0b0b0"></div>
<div class="a" style="left:856px;top:233px;width:10px;height:1.5px;background:#b0b0b0"></div>
<div class="a" style="left:851px;top:219px;width:1.5px;height:15px;background:#b0b0b0"></div>
<div class="a" style="left:869.7px;top:226.0px;width:0;height:0;border-left:3px solid transparent;border-right:3px solid transparent;border-top:3px solid #b8b8b8"></div>
<div class="a" style="left:723px;top:253px;width:12px;height:1.5px;background:#b0b0b0"></div>
<div class="a" style="left:723px;top:257px;width:12px;height:1.5px;background:#b0b0b0"></div>
<div class="a" style="left:723px;top:261px;width:12px;height:1.5px;background:#b0b0b0"></div>
<div class="a" style="left:723px;top:265px;width:12px;height:1.5px;background:#b0b0b0"></div>
<div class="a" style="left:745px;top:253px;width:14px;height:1.5px;background:#b0b0b0"></div>
<div class="a" style="left:745px;top:257px;width:14px;height:1.5px;background:#b0b0b0"></div>
<div class="a" style="left:745px;top:261px;width:14px;height:1.5px;background:#b0b0b0"></div>
<div class="a" style="left:745px;top:265px;width:14px;height:1.5px;background:#b0b0b0"></div>
<div class="a" style="left:768px;top:253px;width:12px;height:1.5px;background:#b0b0b0"></div>
<div class="a" style="left:768px;top:257px;width:12px;height:1.5px;background:#b0b0b0"></div>
<div class="a" style="left:768px;top:261px;width:12px;height:1.5px;background:#b0b0b0"></div>
<div class="a" style="left:768px;top:265px;width:12px;height:1.5px;background:#b0b0b0"></div>
<div class="a" style="left:790px;top:253px;width:14px;height:1.5px;background:#b0b0b0"></div>
<div class="a" style="left:790px;top:257px;width:14px;height:1.5px;background:#b0b0b0"></div>
<div class="a" style="left:790px;top:261px;width:14px;height:1.5px;background:#b0b0b0"></div>
<div class="a" style="left:790px;top:265px;width:14px;height:1.5px;background:#b0b0b0"></div>
<div class="a" style="left:812px;top:250px;width:1px;height:18px;background:#d0d0d0"></div>
<div class="a" style="left:819px;top:253px;width:15px;height:1.5px;background:#b0b0b0"></div>
<div class="a" style="left:819px;top:257px;width:15px;height:1.5px;background:#b0b0b0"></div>
<div class="a" style="left:819px;top:261px;width:15px;height:1.5px;background:#b0b0b0"></div>
<div class="a" style="left:819px;top:265px;width:15px;height:1.5px;background:#b0b0b0"></div>
<div class="a" style="left:839.0px;top:258.0px;width:0;height:0;border-left:3px solid transparent;border-right:3px solid transparent;border-top:3px solid #b8b8b8"></div>
<svg class="a" style="left:882px;top:210px" width="17" height="17" viewBox="0 0 17 17"><path d="M2,1 V16 M6,1 V16" stroke="#b0b0b0"/><text x="9" y="8" font-size="8" fill="#b0b0b0" font-family="Liberation Sans">A</text><path d="M13,9 V16" stroke="#b0b0b0"/></svg>
<div class="t" style="left:902.6px;top:214.0px;font-size:13px;color:#a8a8a8;letter-spacing:-0.04px">Направление текста</div>
<div class="a" style="left:1027.3px;top:219.5px;width:0;height:0;border-left:3px solid transparent;border-right:3px solid transparent;border-top:3px solid #c0c0c0"></div>
<svg class="a" style="left:882px;top:235px" width="17" height="15" viewBox="0 0 17 15"><path d="M3,0.5 H0.5 V14.5 H3 M14,0.5 H16.5 V14.5 H14" fill="none" stroke="#b0b0b0"/><path d="M8.5,1 V6 M6,3.5 L8.5,1 L11,3.5 M8.5,9 V14 M6,11.5 L8.5,14 L11,11.5 M4,7.5 H13" fill="none" stroke="#b0b0b0"/></svg>
<div class="t" style="left:902.6px;top:236.7px;font-size:13px;color:#a8a8a8;letter-spacing:-0.09px">Выровнять текст</div>
<div class="a" style="left:1004.5px;top:242.5px;width:0;height:0;border-left:3px solid transparent;border-right:3px solid transparent;border-top:3px solid #c0c0c0"></div>
<svg class="a" style="left:882px;top:258px" width="17" height="16" viewBox="0 0 17 16"><path d="M0,1 H10 L13,4 V1" fill="none" stroke="#b0b0b0"/><rect x="5.5" y="6.5" width="11" height="9" fill="#fff" stroke="#b0b0b0"/><path d="M7,9 H15 M7,11 H15 M7,13 H15" stroke="#b0b0b0"/></svg>
<div class="t" style="left:902.6px;top:261.5px;font-size:13px;color:#a8a8a8;letter-spacing:0.11px">Преобразовать в SmartArt</div>
<div class="a" style="left:1064.5px;top:267.5px;width:0;height:0;border-left:3px solid transparent;border-right:3px solid transparent;border-top:3px solid #c0c0c0"></div>
<div class="t" style="left:873px;top:286.4px;font-size:11px;color:#666;letter-spacing:0.3px">Абзац</div>
<svg class="a" style="left:1069px;top:290px" width="7" height="7" viewBox="0 0 7 7"><path d="M0.5,6.5 V0.5 H6.5" fill="none" stroke="#a0a0a0"/><path d="M2,2 L6,6 M6,3.5 V6 H3.5" fill="none" stroke="#707070"/></svg>
<div class="a" style="left:1080px;top:207px;width:1px;height:90px;background:#dad9db"></div>
<div class="a" style="left:1085px;top:209px;width:143px;height:67px;background:#fff;border:1px solid #c6c6c6"></div>
<div class="a" style="left:1212px;top:210px;width:15px;height:65px;background:#f3f3f3;border-left:1px solid #dedede"></div>
<div class="a" style="left:1213px;top:210px;width:14px;height:21px;background:#e4e4e4"></div>
<div class="a" style="left:1212px;top:231px;width:15px;height:1px;background:#dedede"></div>
<div class="a" style="left:1212px;top:252px;width:15px;height:1px;background:#dedede"></div>
<div class="a" style="left:1217px;top:218px;width:0;height:0;border-left:2.5px solid transparent;border-right:2.5px solid transparent;border-bottom:2.5px solid #b0b0b0"></div>
<div class="a" style="left:1217.0px;top:240.0px;width:0;height:0;border-left:2.5px solid transparent;border-right:2.5px solid transparent;border-top:2.5px solid #555"></div>
<div class="a" style="left:1217px;top:260px;width:5px;height:1px;background:#555"></div>
<div class="a" style="left:1217.0px;top:263.0px;width:0;height:0;border-left:2.5px solid transparent;border-right:2.5px solid transparent;border-top:2.5px solid #555"></div>
<svg class="a" style="left:1087px;top:213px" width="124" height="58" viewBox="0 0 124 58" fill="none" stroke="#444" stroke-width="1">
<rect x="1.5" y="1.5" width="16" height="13" stroke="#555"/><text x="3" y="8" font-size="7" fill="#3b6fc3" stroke="none" font-family="Liberation Sans" font-weight="bold">A</text><path d="M9,5 H16 M9,8 H16 M3,11 H16" stroke="#555"/>
<path d="M22,1 L37,14"/>
<path d="M43,1 L58,14 M54,14 H58 V10"/>
<rect x="64.5" y="2.5" width="15" height="11"/>
<ellipse cx="93" cy="8" rx="8" ry="6"/>
<rect x="106.5" y="2.5" width="15" height="11" rx="3"/>
<path d="M2,35 L9,22 L16,35 Z"/>
<path d="M22,23 H29 V35 H37"/>
<path d="M43,23 H50 V35 H58 M55,32 L58,35 L55,38"/>
<path d="M64,26 H72 V22 L79,29 L72,36 V32 H64 Z"/>
<path d="M89,22 V29 H85 L93,36 L101,29 H97 V22 Z"/>
<path d="M106.5,23.5 H114 C120,23.5 121,28 119,30 H121.5 V35.5 H106.5 Z"/>
<path d="M6,44 C2,48 10,50 5,53 C2,55 8,57 9,53 C10,50 14,52 11,55"/>
<path d="M22,45 C30,45 36,49 37,56"/>
<path d="M43,56 C46,44 52,44 54,50 C56,56 58,56 59,56"/>
<path d="M74,43.5 C71,43.5 71,44.5 71,46.5 V48.5 C71,50 70,50 68,50 C70,50 71,50 71,51.5 V53.5 C71,55.5 71,56.5 74,56.5"/>
<path d="M91,43.5 C94,43.5 94,44.5 94,46.5 V48.5 C94,50 95,50 97,50 C95,50 94,50 94,51.5 V53.5 C94,55.5 94,56.5 91,56.5"/>
<path d="M113,43 L115.5,48 L121,48.5 L117,52 L118.5,57 L113,54.5 L107.5,57 L109,52 L105,48.5 L110.5,48 Z"/>
</svg>
<svg class="a" style="left:1255px;top:210px" width="32" height="31" viewBox="0 0 32 31"><rect x="7" y="8" width="16" height="16" fill="#e6b85c"/><rect x="0.5" y="0.5" width="13" height="13" fill="#fff" stroke="#777"/><rect x="17.5" y="17.5" width="13" height="13" fill="#fff" stroke="#777"/></svg>
<div class="t" style="left:1232px;top:248.6px;font-size:13px;color:#444;letter-spacing:0.24px">Упорядочить</div>
<div class="a" style="left:1268.5px;top:270.5px;width:0;height:0;border-left:3px solid transparent;border-right:3px solid transparent;border-top:3px solid #666"></div>
<svg class="a" style="left:1330px;top:210px" width="34" height="34" viewBox="0 0 34 34"><rect x="0.5" y="0.5" width="28" height="28" rx="5" fill="#f3f0f5" stroke="#c0c0c0"/><path d="M33,10 L20,26 L17,31 C14,33 12,31 14,28 L19,25 Z" fill="#b8b8b8"/></svg>
<div class="t" style="left:1316px;top:248.6px;font-size:13px;color:#a8a8a8;letter-spacing:0px">Экспресс-</div>
<div class="t" style="left:1324px;top:264.2px;font-size:13px;color:#a8a8a8;">стили</div>
<div class="a" style="left:1361.0px;top:270.5px;width:0;height:0;border-left:3px solid transparent;border-right:3px solid transparent;border-top:3px solid #c0c0c0"></div>
<svg class="a" style="left:1383px;top:210px" width="15" height="15" viewBox="0 0 15 15"><path d="M2,7 L7,2 L13,8 L8,13 Z" fill="none" stroke="#b0b0b0" stroke-width="1.2"/><path d="M5,4 L3,1" stroke="#b0b0b0"/></svg>
<div class="t" style="left:1401.2px;top:212.0px;font-size:13px;color:#a8a8a8;letter-spacing:-0.16px">Заливка фигуры</div>
<div class="a" style="left:1501.0px;top:217.5px;width:0;height:0;border-left:3px solid transparent;border-right:3px solid transparent;border-top:3px solid #c0c0c0"></div>
<svg class="a" style="left:1380px;top:233px" width="16" height="15" viewBox="0 0 16 15"><path d="M0.5,3 V14.5 H12" fill="none" stroke="#b0b0b0"/><path d="M4,11 L5,8 L13,0.5 L15,2.5 L7,10 Z" fill="none" stroke="#b0b0b0"/></svg>
<div class="t" style="left:1401.2px;top:235.7px;font-size:13px;color:#a8a8a8;letter-spacing:0.03px">Контур фигуры</div>
<div class="a" style="left:1495.0px;top:241.5px;width:0;height:0;border-left:3px solid transparent;border-right:3px solid transparent;border-top:3px solid #c0c0c0"></div>
<svg class="a" style="left:1381px;top:257px" width="16" height="14" viewBox="0 0 16 14"><path d="M1,7 C1,2 5,1 8,1 C13,1 15,3 15,7 C15,11 13,13 8,13 C3,13 1,11 1,7 Z" fill="#d6d6d6" stroke="#b0b0b0"/><path d="M3,6 C3,3 6,3 9,3" stroke="#fff" fill="none"/></svg>
<div class="t" style="left:1401.2px;top:258.5px;font-size:13px;color:#a8a8a8;letter-spacing:-0.5px">Эффекты фигуры</div>
<div class="a" style="left:1506.0px;top:264.5px;width:0;height:0;border-left:3px solid transparent;border-right:3px solid transparent;border-top:3px solid #c0c0c0"></div>
<div class="t" style="left:1264.6px;top:286.4px;font-size:11px;color:#666;letter-spacing:0px">Рисование</div>
<svg class="a" style="left:1512px;top:290px" width="7" height="7" viewBox="0 0 7 7"><path d="M0.5,6.5 V0.5 H6.5" fill="none" stroke="#a0a0a0"/><path d="M2,2 L6,6 M6,3.5 V6 H3.5" fill="none" stroke="#707070"/></svg>
<div class="a" style="left:1520px;top:207px;width:1px;height:90px;background:#dad9db"></div>
<svg class="a" style="left:1528px;top:210px" width="16" height="16" viewBox="0 0 16 16"><circle cx="10" cy="6" r="4.8" fill="none" stroke="#2b62b8" stroke-width="1.8"/><path d="M6.5,9.5 L1.5,14.5" stroke="#2b62b8" stroke-width="2.2"/></svg>
<div class="t" style="left:1547.7px;top:211.9px;font-size:13px;color:#444;letter-spacing:0.1px">Найти</div>
<svg class="a" style="left:1527px;top:234px" width="19" height="16" viewBox="0 0 19 16"><text x="1" y="7" font-size="8.5" fill="#7a5aa8" font-family="Liberation Sans">ab</text><text x="7" y="15" font-size="8.5" fill="#3c7d5a" font-family="Liberation Sans">ac</text><path d="M1,10 H6 M4,8 L6,10 L4,12" stroke="#3b78c3" fill="none"/></svg>
<div class="t" style="left:1547.7px;top:235.2px;font-size:13px;color:#444;letter-spacing:0px">Заменить</div>
<div class="a" style="left:1613.4px;top:241.0px;width:0;height:0;border-left:3px solid transparent;border-right:3px solid transparent;border-top:3px solid #666"></div>
<svg class="a" style="left:1531px;top:257px" width="11" height="16" viewBox="0 0 11 16"><path d="M1,1 V13 L4,10 L6.5,15 L8.5,14 L6,9 L10,9 Z" fill="#fff" stroke="#555"/></svg>
<div class="t" style="left:1547.7px;top:258.7px;font-size:13px;color:#444;letter-spacing:-0.2px">Выделить</div>
<div class="a" style="left:1608.7px;top:264.5px;width:0;height:0;border-left:3px solid transparent;border-right:3px solid transparent;border-top:3px solid #666"></div>
<div class="t" style="left:1532px;top:286.4px;font-size:11px;color:#666;letter-spacing:0.05px">Редактирование</div>
<div class="a" style="left:1627px;top:207px;width:1px;height:90px;background:#dad9db"></div>
<svg class="a" style="left:1773px;top:287px" width="11" height="7" viewBox="0 0 11 7"><path d="M1,6 L5.5,1.5 L10,6" fill="none" stroke="#555" stroke-width="1.3"/></svg>

<!-- ===== PPT main area ===== -->
<!-- thumbnails panel -->
<div class="a" style="left:127px;top:301px;width:167px;height:682px;background:#e6e6e8"></div>
<div class="a" style="left:294px;top:301px;width:1px;height:682px;background:#d2d2d4"></div>
<!-- thumbnails -->
<div class="a" style="left:127px;top:301px;width:147px;height:682px;overflow:hidden">
<div class="a" style="left:-127px;top:-301px;width:1920px;height:1080px">
<div class="a" style="left:156.0px;top:320.5px;width:97.5px;height:55.0px;background:#d0d0d0;"></div>
<div class="a" style="left:157.0px;top:321.5px;width:95.5px;height:53.0px;background:#a9b44a;"></div>
<div class="a" style="left:159.5px;top:324.0px;width:90.5px;height:48.0px;background:#fdfdf8;"></div>
<div class="t" style="left:141px;top:319.5px;font-size:15px;color:#555">1</div>
<div class="a" style="left:159.5px;top:324.0px;width:90.5px;height:16.0px;background:linear-gradient(172deg,#4a6a28 0%,#7a9a38 30%,#2a4a18 50%,#9ab830 78%,#c8d040 100%);"></div>
<div class="a" style="left:175.0px;top:342.5px;width:60.0px;height:1.5px;background:rgba(40,40,40,0.6);"></div>
<div class="a" style="left:173.0px;top:345.2px;width:64.0px;height:1.5px;background:rgba(40,40,40,0.6);"></div>
<div class="a" style="left:169.0px;top:347.9px;width:68.0px;height:1.5px;background:rgba(40,40,40,0.6);"></div>
<div class="a" style="left:172.0px;top:350.6px;width:62.0px;height:1.5px;background:rgba(40,40,40,0.6);"></div>
<div class="a" style="left:173.0px;top:353.3px;width:62.0px;height:1.5px;background:rgba(40,40,40,0.6);"></div>
<div class="a" style="left:173.0px;top:364.5px;width:64.0px;height:0.8px;background:#a8b62a;"></div>
<div class="a" style="left:221.0px;top:367.0px;width:20.0px;height:0.9px;background:rgba(60,60,60,0.6);"></div>
<div class="a" style="left:209.0px;top:370.0px;width:34.0px;height:0.8px;background:rgba(90,90,90,0.35);"></div>
<div class="a" style="left:153.8px;top:395.5px;width:100.7px;height:59.2px;background:#c8502f;"></div>
<div class="a" style="left:156.8px;top:398.5px;width:94.7px;height:53.2px;background:#e6e6e8;"></div>
<div class="a" style="left:157.5px;top:399.3px;width:94.0px;height:52.5px;background:#a9b44a;"></div>
<div class="a" style="left:160.0px;top:401.8px;width:89.0px;height:47.5px;background:#fdfdf8;"></div>
<div class="t" style="left:141px;top:397.3px;font-size:15px;color:#c8502f">2</div>
<div class="a" style="left:163.5px;top:402.8px;width:58.0px;height:2.0px;background:rgba(50,50,50,0.65);"></div>
<div class="a" style="left:163.5px;top:406.8px;width:52.0px;height:1.6px;background:rgba(50,50,50,0.5);"></div>
<div class="a" style="left:163.5px;top:413.3px;width:44.3px;height:1.1px;background:rgba(40,40,40,0.55);"></div>
<div class="a" style="left:163.5px;top:415.6px;width:46.6px;height:1.1px;background:rgba(40,40,40,0.55);"></div>
<div class="a" style="left:163.5px;top:417.9px;width:45.3px;height:1.1px;background:rgba(40,40,40,0.55);"></div>
<div class="a" style="left:163.5px;top:420.2px;width:47.0px;height:1.1px;background:rgba(40,40,40,0.55);"></div>
<div class="a" style="left:163.5px;top:422.5px;width:22.5px;height:1.1px;background:rgba(40,40,40,0.55);"></div>
<div class="a" style="left:163.5px;top:426.3px;width:47.2px;height:1.1px;background:rgba(40,40,40,0.55);"></div>
<div class="a" style="left:163.5px;top:428.6px;width:43.0px;height:1.1px;background:rgba(40,40,40,0.55);"></div>
<div class="a" style="left:163.5px;top:430.9px;width:42.6px;height:1.1px;background:rgba(40,40,40,0.55);"></div>
<div class="a" style="left:163.5px;top:433.2px;width:22.5px;height:1.1px;background:rgba(40,40,40,0.55);"></div>
<svg class="a" style="left:220.3px;top:409px" width="26.7" height="37" viewBox="15 17 737 1045" preserveAspectRatio="none"><rect x="15" y="17" width="737" height="1045" fill="#555"/><path d="M15,770 C90,720 180,670 270,640 L290,1062 L15,1062 Z" fill="#2a2a2a"/><path d="M640,560 C690,555 752,580 760,600 L760,1070 L430,1070 C470,960 510,880 560,820 Z" fill="#2c2c2c"/><path d="M250,660 C300,700 360,770 410,800 L545,835 C500,920 470,1000 450,1070 L225,1070 C235,960 245,800 250,660 Z" fill="#cfcfcf"/><path d="M200,175 C250,90 400,45 540,85 C620,110 670,180 675,260 C670,320 650,350 640,370 C600,300 470,250 360,265 C310,300 285,390 275,470 C260,560 220,620 140,620 C75,605 55,520 75,440 C100,340 150,250 200,175 Z" fill="#d0d0d0"/><path d="M340,255 C430,220 570,240 645,300 C665,380 665,470 655,540 C620,590 500,600 420,585 C330,560 295,480 300,390 Z" fill="#c8c8c8"/><path d="M300,520 C330,575 390,590 450,588 C520,575 600,555 665,560 C695,625 690,720 650,785 C610,825 520,825 450,795 C380,765 325,690 305,610 Z" fill="#ececec"/></svg>
<div class="a" style="left:156.0px;top:474.0px;width:97.5px;height:55.0px;background:#d0d0d0;"></div>
<div class="a" style="left:157.0px;top:475.0px;width:95.5px;height:53.0px;background:#a9b44a;"></div>
<div class="a" style="left:159.5px;top:477.5px;width:90.5px;height:48.0px;background:#fdfdf8;"></div>
<div class="t" style="left:141px;top:473.0px;font-size:15px;color:#555">3</div>
<div class="a" style="left:162.0px;top:479.8px;width:75.5px;height:1.8px;background:rgba(40,40,40,0.6);"></div>
<div class="a" style="left:162.0px;top:482.8px;width:48.0px;height:1.8px;background:rgba(40,40,40,0.6);"></div>
<div class="a" style="left:162.0px;top:491.0px;width:42.0px;height:1.0px;background:rgba(50,50,50,0.5);"></div>
<div class="a" style="left:162.0px;top:493.4px;width:38.2px;height:1.0px;background:rgba(50,50,50,0.5);"></div>
<div class="a" style="left:162.0px;top:495.8px;width:38.1px;height:1.0px;background:rgba(50,50,50,0.5);"></div>
<div class="a" style="left:162.0px;top:498.2px;width:43.0px;height:1.0px;background:rgba(50,50,50,0.5);"></div>
<div class="a" style="left:162.0px;top:500.6px;width:39.6px;height:1.0px;background:rgba(50,50,50,0.5);"></div>
<div class="a" style="left:162.0px;top:503.0px;width:41.9px;height:1.0px;background:rgba(50,50,50,0.5);"></div>
<div class="a" style="left:162.0px;top:505.4px;width:19.4px;height:1.0px;background:rgba(50,50,50,0.5);"></div>
<div class="a" style="left:209.0px;top:488.0px;width:38.0px;height:28.4px;background:linear-gradient(180deg,#d8d0b0 0%,#b89060 25%,#8a4a3a 45%,#3a6a7a 60%,#7a3a30 75%,#a8d0d0 100%);filter:blur(0.4px)"></div>
<div class="a" style="left:156.0px;top:550.0px;width:97.5px;height:55.0px;background:#d0d0d0;"></div>
<div class="a" style="left:157.0px;top:551.0px;width:95.5px;height:53.0px;background:#a9b44a;"></div>
<div class="a" style="left:159.5px;top:553.5px;width:90.5px;height:48.0px;background:#fdfdf8;"></div>
<div class="t" style="left:141px;top:549.0px;font-size:15px;color:#555">4</div>
<div class="a" style="left:162.0px;top:555.8px;width:75.5px;height:1.8px;background:rgba(40,40,40,0.6);"></div>
<div class="a" style="left:162.0px;top:558.8px;width:77.5px;height:1.8px;background:rgba(40,40,40,0.6);"></div>
<div class="a" style="left:162.0px;top:561.8px;width:42.0px;height:1.6px;background:rgba(40,40,40,0.55);"></div>
<div class="a" style="left:162.0px;top:568.0px;width:42.4px;height:1.0px;background:rgba(50,50,50,0.5);"></div>
<div class="a" style="left:162.0px;top:570.4px;width:43.5px;height:1.0px;background:rgba(50,50,50,0.5);"></div>
<div class="a" style="left:162.0px;top:572.8px;width:40.1px;height:1.0px;background:rgba(50,50,50,0.5);"></div>
<div class="a" style="left:162.0px;top:575.2px;width:43.5px;height:1.0px;background:rgba(50,50,50,0.5);"></div>
<div class="a" style="left:162.0px;top:577.6px;width:45.1px;height:1.0px;background:rgba(50,50,50,0.5);"></div>
<div class="a" style="left:162.0px;top:580.0px;width:42.7px;height:1.0px;background:rgba(50,50,50,0.5);"></div>
<div class="a" style="left:162.0px;top:582.4px;width:44.2px;height:1.0px;background:rgba(50,50,50,0.5);"></div>
<div class="a" style="left:162.0px;top:584.8px;width:43.7px;height:1.0px;background:rgba(50,50,50,0.5);"></div>
<div class="a" style="left:162.0px;top:587.2px;width:39.5px;height:1.0px;background:rgba(50,50,50,0.5);"></div>
<div class="a" style="left:162.0px;top:589.6px;width:20.7px;height:1.0px;background:rgba(50,50,50,0.5);"></div>
<div class="a" style="left:212.0px;top:565.0px;width:35.5px;height:34.5px;background:linear-gradient(160deg,#d0c0a8 0%,#b88060 35%,#9a5a30 50%,#4a2a1a 75%,#8a5a3a 100%);filter:blur(0.4px)"></div>
<div class="a" style="left:156.0px;top:626.5px;width:97.5px;height:55.0px;background:#d0d0d0;"></div>
<div class="a" style="left:157.0px;top:627.5px;width:95.5px;height:53.0px;background:#a9b44a;"></div>
<div class="a" style="left:159.5px;top:630.0px;width:90.5px;height:48.0px;background:#fdfdf8;"></div>
<div class="t" style="left:141px;top:625.5px;font-size:15px;color:#555">5</div>
<div class="a" style="left:162.0px;top:632.3px;width:75.5px;height:1.8px;background:rgba(40,40,40,0.6);"></div>
<div class="a" style="left:162.0px;top:635.3px;width:77.5px;height:1.8px;background:rgba(40,40,40,0.6);"></div>
<div class="a" style="left:162.0px;top:638.3px;width:42.0px;height:1.6px;background:rgba(40,40,40,0.55);"></div>
<div class="a" style="left:162.0px;top:645.5px;width:44.3px;height:1.0px;background:rgba(50,50,50,0.5);"></div>
<div class="a" style="left:162.0px;top:647.9px;width:43.2px;height:1.0px;background:rgba(50,50,50,0.5);"></div>
<div class="a" style="left:162.0px;top:650.3px;width:41.2px;height:1.0px;background:rgba(50,50,50,0.5);"></div>
<div class="a" style="left:162.0px;top:652.7px;width:39.3px;height:1.0px;background:rgba(50,50,50,0.5);"></div>
<div class="a" style="left:162.0px;top:655.1px;width:45.1px;height:1.0px;background:rgba(50,50,50,0.5);"></div>
<div class="a" style="left:162.0px;top:657.5px;width:42.4px;height:1.0px;background:rgba(50,50,50,0.5);"></div>
<div class="a" style="left:162.0px;top:659.9px;width:44.1px;height:1.0px;background:rgba(50,50,50,0.5);"></div>
<div class="a" style="left:162.0px;top:662.3px;width:20.7px;height:1.0px;background:rgba(50,50,50,0.5);"></div>
<div class="a" style="left:212.0px;top:643.0px;width:33.0px;height:33.5px;background:linear-gradient(180deg,#e0e0e0 0%,#9a9a9a 25%,#505050 55%,#2a2a2a 75%,#888 100%);filter:blur(0.4px)"></div>
<div class="a" style="left:156.0px;top:703.0px;width:97.5px;height:55.0px;background:#d0d0d0;"></div>
<div class="a" style="left:157.0px;top:704.0px;width:95.5px;height:53.0px;background:#a9b44a;"></div>
<div class="a" style="left:159.5px;top:706.5px;width:90.5px;height:48.0px;background:#fdfdf8;"></div>
<div class="t" style="left:141px;top:702.0px;font-size:15px;color:#555">6</div>
<div class="a" style="left:162.0px;top:708.8px;width:75.5px;height:1.8px;background:rgba(40,40,40,0.6);"></div>
<div class="a" style="left:162.0px;top:711.8px;width:77.5px;height:1.8px;background:rgba(40,40,40,0.6);"></div>
<div class="a" style="left:162.0px;top:717.0px;width:44.8px;height:1.0px;background:rgba(50,50,50,0.5);"></div>
<div class="a" style="left:162.0px;top:719.4px;width:43.6px;height:1.0px;background:rgba(50,50,50,0.5);"></div>
<div class="a" style="left:162.0px;top:721.8px;width:45.1px;height:1.0px;background:rgba(50,50,50,0.5);"></div>
<div class="a" style="left:162.0px;top:724.2px;width:41.5px;height:1.0px;background:rgba(50,50,50,0.5);"></div>
<div class="a" style="left:162.0px;top:726.6px;width:44.2px;height:1.0px;background:rgba(50,50,50,0.5);"></div>
<div class="a" style="left:162.0px;top:729.0px;width:41.8px;height:1.0px;background:rgba(50,50,50,0.5);"></div>
<div class="a" style="left:162.0px;top:731.4px;width:45.2px;height:1.0px;background:rgba(50,50,50,0.5);"></div>
<div class="a" style="left:162.0px;top:733.8px;width:44.8px;height:1.0px;background:rgba(50,50,50,0.5);"></div>
<div class="a" style="left:162.0px;top:736.2px;width:39.4px;height:1.0px;background:rgba(50,50,50,0.5);"></div>
<div class="a" style="left:162.0px;top:738.6px;width:20.5px;height:1.0px;background:rgba(50,50,50,0.5);"></div>
<div class="a" style="left:219.7px;top:717.0px;width:25.3px;height:15.0px;background:linear-gradient(90deg,#8a3020,#c07060 50%,#d8c0b0);filter:blur(0.4px)"></div>
<div class="a" style="left:211.6px;top:732.6px;width:28.4px;height:19.0px;background:linear-gradient(135deg,#4a3018,#b08048 40%,#2a1a10);filter:blur(0.4px)"></div>
<div class="a" style="left:156.0px;top:779.0px;width:97.5px;height:55.0px;background:#d0d0d0;"></div>
<div class="a" style="left:157.0px;top:780.0px;width:95.5px;height:53.0px;background:#a9b44a;"></div>
<div class="a" style="left:159.5px;top:782.5px;width:90.5px;height:48.0px;background:#fdfdf8;"></div>
<div class="t" style="left:141px;top:778.0px;font-size:15px;color:#555">7</div>
<div class="a" style="left:162.0px;top:784.8px;width:75.5px;height:1.8px;background:rgba(40,40,40,0.6);"></div>
<div class="a" style="left:162.0px;top:787.8px;width:77.5px;height:1.8px;background:rgba(40,40,40,0.6);"></div>
<div class="a" style="left:162.0px;top:790.8px;width:42.0px;height:1.6px;background:rgba(40,40,40,0.55);"></div>
<div class="a" style="left:162.0px;top:797.0px;width:37.4px;height:1.0px;background:rgba(50,50,50,0.5);"></div>
<div class="a" style="left:162.0px;top:799.4px;width:37.9px;height:1.0px;background:rgba(50,50,50,0.5);"></div>
<div class="a" style="left:162.0px;top:801.8px;width:42.8px;height:1.0px;background:rgba(50,50,50,0.5);"></div>
<div class="a" style="left:162.0px;top:804.2px;width:39.4px;height:1.0px;background:rgba(50,50,50,0.5);"></div>
<div class="a" style="left:162.0px;top:806.6px;width:40.6px;height:1.0px;background:rgba(50,50,50,0.5);"></div>
<div class="a" style="left:162.0px;top:809.0px;width:38.5px;height:1.0px;background:rgba(50,50,50,0.5);"></div>
<div class="a" style="left:162.0px;top:811.4px;width:39.8px;height:1.0px;background:rgba(50,50,50,0.5);"></div>
<div class="a" style="left:162.0px;top:813.8px;width:39.0px;height:1.0px;background:rgba(50,50,50,0.5);"></div>
<div class="a" style="left:162.0px;top:816.2px;width:19.4px;height:1.0px;background:rgba(50,50,50,0.5);"></div>
<div class="a" style="left:209.0px;top:799.0px;width:39.0px;height:24.5px;background:linear-gradient(90deg,#e8d0c8 0%,#d8a898 35%,#6a88a8 50%,#c05040 70%,#704030 100%);filter:blur(0.4px)"></div>
<div class="a" style="left:156.0px;top:855.0px;width:97.5px;height:55.0px;background:#d0d0d0;"></div>
<div class="a" style="left:157.0px;top:856.0px;width:95.5px;height:53.0px;background:#a9b44a;"></div>
<div class="a" style="left:159.5px;top:858.5px;width:90.5px;height:48.0px;background:#fdfdf8;"></div>
<div class="t" style="left:141px;top:854.0px;font-size:15px;color:#555">8</div>
<div class="a" style="left:162.0px;top:860.8px;width:75.5px;height:1.8px;background:rgba(40,40,40,0.6);"></div>
<div class="a" style="left:162.0px;top:863.8px;width:77.5px;height:1.8px;background:rgba(40,40,40,0.6);"></div>
<div class="a" style="left:162.0px;top:866.8px;width:42.0px;height:1.6px;background:rgba(40,40,40,0.55);"></div>
<div class="a" style="left:162.0px;top:871.0px;width:41.2px;height:1.0px;background:rgba(50,50,50,0.5);"></div>
<div class="a" style="left:162.0px;top:873.4px;width:42.8px;height:1.0px;background:rgba(50,50,50,0.5);"></div>
<div class="a" style="left:162.0px;top:875.8px;width:42.8px;height:1.0px;background:rgba(50,50,50,0.5);"></div>
<div class="a" style="left:162.0px;top:878.2px;width:44.9px;height:1.0px;background:rgba(50,50,50,0.5);"></div>
<div class="a" style="left:162.0px;top:880.6px;width:43.4px;height:1.0px;background:rgba(50,50,50,0.5);"></div>
<div class="a" style="left:162.0px;top:883.0px;width:45.1px;height:1.0px;background:rgba(50,50,50,0.5);"></div>
<div class="a" style="left:162.0px;top:885.4px;width:44.6px;height:1.0px;background:rgba(50,50,50,0.5);"></div>
<div class="a" style="left:162.0px;top:887.8px;width:45.5px;height:1.0px;background:rgba(50,50,50,0.5);"></div>
<div class="a" style="left:162.0px;top:890.2px;width:43.4px;height:1.0px;background:rgba(50,50,50,0.5);"></div>
<div class="a" style="left:162.0px;top:892.6px;width:39.9px;height:1.0px;background:rgba(50,50,50,0.5);"></div>
<div class="a" style="left:162.0px;top:895.0px;width:44.6px;height:1.0px;background:rgba(50,50,50,0.5);"></div>
<div class="a" style="left:162.0px;top:897.4px;width:20.5px;height:1.0px;background:rgba(50,50,50,0.5);"></div>
<div class="a" style="left:211.6px;top:875.6px;width:36.4px;height:21.4px;background:linear-gradient(180deg,#6a5a48,#4a3a2a 50%,#7a6a58);filter:blur(0.4px)"></div>
<div class="a" style="left:156.0px;top:931.5px;width:97.5px;height:55.0px;background:#d0d0d0;"></div>
<div class="a" style="left:157.0px;top:932.5px;width:95.5px;height:53.0px;background:#a9b44a;"></div>
<div class="a" style="left:159.5px;top:935.0px;width:90.5px;height:48.0px;background:#fdfdf8;"></div>
<div class="t" style="left:141px;top:930.5px;font-size:15px;color:#555">9</div>
<div class="a" style="left:162.0px;top:937.3px;width:75.5px;height:1.8px;background:rgba(40,40,40,0.6);"></div>
<div class="a" style="left:162.0px;top:940.3px;width:77.5px;height:1.8px;background:rgba(40,40,40,0.6);"></div>
<div class="a" style="left:162.0px;top:939.5px;width:35.8px;height:1.0px;background:rgba(50,50,50,0.5);"></div>
<div class="a" style="left:162.0px;top:941.9px;width:35.5px;height:1.0px;background:rgba(50,50,50,0.5);"></div>
<div class="a" style="left:162.0px;top:944.3px;width:33.7px;height:1.0px;background:rgba(50,50,50,0.5);"></div>
<div class="a" style="left:162.0px;top:946.7px;width:34.5px;height:1.0px;background:rgba(50,50,50,0.5);"></div>
<div class="a" style="left:162.0px;top:949.1px;width:31.7px;height:1.0px;background:rgba(50,50,50,0.5);"></div>
<div class="a" style="left:162.0px;top:951.5px;width:35.1px;height:1.0px;background:rgba(50,50,50,0.5);"></div>
<div class="a" style="left:162.0px;top:953.9px;width:33.7px;height:1.0px;background:rgba(50,50,50,0.5);"></div>
<div class="a" style="left:162.0px;top:956.3px;width:32.1px;height:1.0px;background:rgba(50,50,50,0.5);"></div>
<div class="a" style="left:162.0px;top:958.7px;width:30.9px;height:1.0px;background:rgba(50,50,50,0.5);"></div>
<div class="a" style="left:162.0px;top:961.1px;width:35.2px;height:1.0px;background:rgba(50,50,50,0.5);"></div>
<div class="a" style="left:162.0px;top:963.5px;width:16.2px;height:1.0px;background:rgba(50,50,50,0.5);"></div>
<div class="a" style="left:226.0px;top:936.4px;width:19.8px;height:24.6px;background:linear-gradient(180deg,#2a2a3a,#c09040 60%,#5a4a30);filter:blur(0.4px)"></div>
<div class="a" style="left:202.0px;top:947.7px;width:21.7px;height:26.3px;background:linear-gradient(160deg,#6a5040,#b04030 50%,#4a3020);filter:blur(0.4px)"></div>
<div class="a" style="left:226.0px;top:963.0px;width:20.0px;height:20.0px;background:linear-gradient(180deg,#ddd,#6a6a70 50%,#3a3a40);filter:blur(0.4px)"></div>
</div></div>
<!-- thumb scrollbar -->
<div class="a" style="left:274px;top:303px;width:16px;height:680px;background:#dcdcde;border-left:1px solid #c8c8c8;border-right:1px solid #c8c8c8"></div>
<div class="a" style="left:275px;top:304px;width:14px;height:569px;background:#fff"></div>
<div class="a" style="left:275px;top:318px;width:14px;height:1px;background:#b8b8b8"></div>
<div class="a" style="left:278px;top:309px;width:0;height:0;border-left:4px solid transparent;border-right:4px solid transparent;border-bottom:4px solid #6a6a6a"></div>

<!-- slide -->
<div class="a" style="left:462px;top:312px;width:1146px;height:646px;background:#a8b62a"></div>
<div class="a" style="left:485px;top:336px;width:1101px;height:599px;background:#fff"></div>
<div class="a" style="left:296px;top:973px;width:1480px;height:1px;background:#d0d0d2"></div>

<!-- right scrollbar -->
<div class="a" style="left:1776px;top:303px;width:16px;height:670px;background:#dcdcde"></div>
<div class="a" style="left:1776px;top:303px;width:16px;height:16px;background:#fff;border:1px solid #d0d0d0"></div>
<div class="a" style="left:1780px;top:308px;width:0;height:0;border-left:4px solid transparent;border-right:4px solid transparent;border-bottom:4px solid #6a6a6a"></div>
<div class="a" style="left:1776px;top:372px;width:16px;height:53px;background:#fff;border:1px solid #b0b0b0"></div>
<div class="a" style="left:1776px;top:898px;width:16px;height:16px;background:#fff;border:1px solid #d0d0d0"></div>
<div class="a" style="left:1780px;top:904px;width:0;height:0;border-left:4px solid transparent;border-right:4px solid transparent;border-top:4px solid #6a6a6a"></div>
<svg class="a" style="left:1779px;top:918px" width="10" height="30" viewBox="0 0 10 30"><path d="M1,5 L5,1 L9,5Z M1,9 L5,5 L9,9Z" fill="#777"/><path d="M1,20 L5,24 L9,20Z M1,24 L5,28 L9,24Z" fill="#777"/></svg>
<div class="a" style="left:1776px;top:973px;width:16px;height:10px;background:#e6e6e8"></div>

<!-- slide title -->
<div class="t" id="st1" style="left:527px;top:344px;font-family:'Liberation Serif',serif;font-weight:bold;font-style:italic;font-size:52.8px;color:#3b3835">Михайло Брайчевський – символ</div>
<div class="t" id="st2" style="left:529px;top:400px;font-family:'Liberation Serif',serif;font-weight:bold;font-style:italic;font-size:52.8px;color:#3b3835">української історичної думки</div>

<!-- bullets -->
<div class="a" style="left:521px;top:529px;width:7px;height:7px;border-radius:50%;background:#a8b62a"></div>
<div class="a" style="left:521px;top:700px;width:7px;height:7px;border-radius:50%;background:#a8b62a"></div>
<div id="body" style="position:absolute;left:538px;top:0;font-family:'Liberation Serif',serif;font-weight:bold;font-size:24px;color:#3d3a37;line-height:1">
<div class="t" style="top:520.5px;transform:scaleY(1.09);transform-origin:0 19px">Михайло Брайчевський – автор понад 500 друкованих</div>
<div class="t" style="top:546.3px;transform:scaleY(1.09);transform-origin:0 19px">праць, 10 монографій.<span style="display:inline-block;width:6px;height:17px;border:1px solid #888;vertical-align:-2px;margin:0 1px"></span>Він був єдиним з істориків</div>
<div class="t" style="top:572.1px;transform:scaleY(1.09);transform-origin:0 19px">радянської доби, хто намагався спростувати догматичні</div>
<div class="t" style="top:597.9px;transform:scaleY(1.09);transform-origin:0 19px">тези ЦК КПРС «До 300-річчя возз’єднання України з</div>
<div class="t" style="top:623.7px;transform:scaleY(1.09);transform-origin:0 19px">Росією» в&nbsp; історичному нарисі «Приєднання чи</div>
<div class="t" style="top:649.5px;transform:scaleY(1.09);transform-origin:0 19px">возз’єднання?».</div>
<div class="t" style="top:691.7px;transform:scaleY(1.09);transform-origin:0 19px">Ця розвідка була підготовлена у 1966 році&nbsp; для</div>
<div class="t" style="top:717.5px;transform:scaleY(1.09);transform-origin:0 19px">«Українського історичного журналу», але так і не була</div>
<div class="t" style="top:743.3px;transform:scaleY(1.09);transform-origin:0 19px">опублікована – хрущовська відлига виявилася</div>
<div class="t" style="top:769.1px;transform:scaleY(1.09);transform-origin:0 19px">нетривалою, а видати її за брежнєвських часів надії не</div>
<div class="t" style="top:794.9px;transform:scaleY(1.09);transform-origin:0 19px">було. Натомість нарис активно поширювався у</div>
<div class="t" style="top:820.7px;transform:scaleY(1.09);transform-origin:0 19px">самвидаві.</div>
</div>
<!-- PHOTO -->
<svg class="a" style="left:1236px;top:437px" width="318" height="451" viewBox="15 17 737 1045" preserveAspectRatio="none">
<defs>
<filter id="bl" x="-10%" y="-10%" width="120%" height="120%"><feGaussianBlur stdDeviation="5"/></filter>
<filter id="bl2" x="-10%" y="-10%" width="120%" height="120%"><feGaussianBlur stdDeviation="2.5"/></filter>
<clipPath id="pc"><rect x="15" y="17" width="737" height="1045"/></clipPath>
</defs>
<g clip-path="url(#pc)">
<rect x="15" y="17" width="737" height="1045" fill="#4a4a4a"/>
<!-- jacket left -->
<path d="M15,800 C80,740 160,690 250,646 L290,760 L300,1062 L15,1062 Z" fill="#262626" filter="url(#bl2)"/>
<!-- jacket right -->
<path d="M651,553 C700,550 740,560 760,575 L760,1070 L455,1070 L534,847 L578,818 L671,754 L681,656 Z" fill="#262626" filter="url(#bl2)"/>
<g stroke="#707070" stroke-width="3" opacity="0.65" fill="none">
<path d="M735,610 L600,1062"/><path d="M752,680 L640,1062"/><path d="M752,800 L690,1062"/><path d="M705,620 L560,1062"/><path d="M690,700 L520,1062"/>
<path d="M40,880 L30,1062"/><path d="M80,830 L70,1062"/><path d="M120,790 L110,1062"/><path d="M160,760 L155,1062"/><path d="M200,740 L195,1062"/>
</g>
<!-- shirt -->
<path d="M255,759 L446,798 L534,847 L455,1070 L225,1070 C235,960 245,850 255,759 Z" fill="#d8d8d8" filter="url(#bl2)"/>
<g stroke="#9a9a9a" stroke-width="2.5" opacity="0.8">
<path d="M270,800 L252,1062"/><path d="M295,800 L282,1062"/><path d="M320,805 L312,1062"/><path d="M345,810 L342,1062"/><path d="M370,815 L372,1062"/><path d="M395,820 L402,1062"/><path d="M420,825 L430,1040"/><path d="M450,830 L458,990"/><path d="M480,840 L480,950"/>
</g>
<!-- collar -->
<path d="M255,656 L377,744 L377,876 L260,764 Z" fill="#cdcdcd" filter="url(#bl2)"/>
<path d="M446,778 L534,790 L534,850 L480,876 L446,840 Z" fill="#444" filter="url(#bl2)"/>
<!-- neck shadow -->
<path d="M250,600 C270,640 300,680 340,720 L377,744 L255,656 Z" fill="#3a3a3a" filter="url(#bl2)"/>
<!-- hair -->
<path d="M184,200 C200,150 240,100 300,70 C360,50 430,50 474,60 C530,75 580,100 600,120 C640,150 665,190 670,240 C675,290 665,320 657,331 C620,300 560,280 500,275 C430,270 370,280 340,300 C300,340 285,400 280,460 C270,530 240,580 200,600 C150,620 100,610 80,570 C60,520 70,460 90,400 C110,330 150,260 184,200 Z" fill="#cbcbcb" filter="url(#bl)"/>
<path d="M230,150 C300,80 420,60 520,90 C600,120 650,180 650,240 C580,215 460,205 370,225 C300,250 270,300 255,360 C230,300 215,220 230,150 Z" fill="#dadada" filter="url(#bl)"/>
<path d="M270,160 C320,120 380,110 420,120 C380,140 330,170 290,210 Z" fill="#8a8a8a" filter="url(#bl)"/>
<path d="M110,420 C140,350 180,300 220,310 C240,380 240,460 215,530 C185,580 130,590 100,550 C85,510 95,460 110,420 Z" fill="#d6d6d6" filter="url(#bl)"/>
<!-- face base -->
<path d="M270,300 C300,270 600,260 660,300 L665,560 L300,600 C280,520 270,400 270,300 Z" fill="#b8b8b8" filter="url(#bl)"/>
<!-- face -->
<path d="M335,265 C420,225 560,235 652,300 C668,380 668,470 660,545 C620,590 500,600 420,585 C330,560 292,480 298,390 C302,320 315,285 335,265 Z" fill="#cfcfcf" filter="url(#bl2)"/>
<path d="M360,250 C450,225 570,240 640,290 C640,320 580,330 500,325 C430,320 380,320 350,335 Z" fill="#dedede" filter="url(#bl)"/>
<g stroke="#a0a0a0" stroke-width="3" fill="none" opacity="0.7" filter="url(#bl2)"><path d="M420,270 C480,260 560,265 610,285"/><path d="M430,290 C490,282 560,285 615,305"/></g>
<!-- eyebrows / eyes -->
<path d="M395,340 C430,318 490,322 525,352 C490,350 440,352 400,372 Z" fill="#555" filter="url(#bl2)"/>
<path d="M568,328 C595,312 630,315 650,330 C630,342 600,342 575,350 Z" fill="#606060" filter="url(#bl2)"/>
<ellipse cx="452" cy="396" rx="38" ry="20" fill="#6a6a6a" filter="url(#bl2)"/>
<ellipse cx="600" cy="388" rx="28" ry="18" fill="#6a6a6a" filter="url(#bl2)"/>
<ellipse cx="455" cy="392" rx="12" ry="10" fill="#2e2e2e"/>
<ellipse cx="603" cy="383" rx="10" ry="9" fill="#2e2e2e"/>
<!-- nose -->
<path d="M525,410 C515,460 500,510 520,540 C560,552 600,545 612,522 C590,518 560,498 548,440 Z" fill="#a8a8a8" filter="url(#bl2)"/>
<path d="M540,430 C548,480 560,510 590,520" stroke="#dcdcdc" stroke-width="14" fill="none" filter="url(#bl)"/>
<!-- ear / cheek shadow -->
<path d="M228,440 C250,420 290,440 300,500 C300,545 280,565 250,555 C230,525 222,470 228,440 Z" fill="#9a9a9a" filter="url(#bl2)"/>
<!-- beard -->
<path d="M289,534 C330,580 390,592 450,590 C520,578 600,555 651,545 L681,656 L671,754 L578,818 L455,788 L382,720 L309,632 Z" fill="#ececec" filter="url(#bl)"/>
<path d="M440,600 C490,612 560,604 600,588" stroke="#4a4a4a" stroke-width="7" fill="none" filter="url(#bl2)"/>
</g>
</svg>


<!-- Zoom toolbar -->
<svg class="a" style="left:38px;top:988px" width="26" height="24" viewBox="0 0 26 24"><rect x="9" y="1" width="7.5" height="13" rx="3.75" fill="#b5b5b5"/><path d="M6,9.5 C6,17 19.5,17 19.5,9.5" fill="none" stroke="#b5b5b5" stroke-width="1.4"/><path d="M12.75,16 V21.5 M9,22 H16.5" stroke="#b5b5b5" stroke-width="1.6"/><path d="M1.5,23 L24.5,0.5" stroke="#e0504a" stroke-width="1.6"/></svg>
<svg class="a" style="left:85px;top:997px" width="9" height="6" viewBox="0 0 9 6"><path d="M1,5 L4.5,1.5 L8,5" fill="none" stroke="#bbb" stroke-width="1.3"/></svg>
<svg class="a" style="left:147px;top:988px" width="26" height="24" viewBox="0 0 26 24"><rect x="0.5" y="5" width="16.5" height="14" rx="2" fill="#b5b5b5"/><path d="M18,9.5 L24.5,6 V18 L18,14.5 Z" fill="#b5b5b5"/><path d="M1.5,23.5 L24,0.5" stroke="#e0504a" stroke-width="1.6"/></svg>
<svg class="a" style="left:202.5px;top:997px" width="9" height="6" viewBox="0 0 9 6"><path d="M1,5 L4.5,1.5 L8,5" fill="none" stroke="#bbb" stroke-width="1.3"/></svg>
<div class="t" style="left:10.6px;top:1017.0px;font-size:12px;color:#cfcfcf;letter-spacing:0.15px">Включить звук</div>
<div class="t" style="left:114.4px;top:1017.0px;font-size:12px;color:#cfcfcf;letter-spacing:0px">Включить видео</div>
<svg class="a" style="left:736px;top:991px" width="26" height="18" viewBox="0 0 26 18"><circle cx="8" cy="4.5" r="4" fill="#b5b5b5"/><path d="M0.5,17.5 C0.5,11 4,9.5 8,9.5 C12,9.5 15.5,11 15.5,17.5 Z" fill="#b5b5b5"/><circle cx="18" cy="6.5" r="3.3" fill="#b5b5b5"/><path d="M14,17.5 C14,13 16,11.5 18.5,11.5 C22,11.5 24.5,13 24.5,17.5 Z" fill="#b5b5b5"/></svg>
<div class="t" style="left:765.5px;top:992.5px;font-size:12px;color:#cfcfcf;">33</div>
<div class="t" style="left:719.5px;top:1017.0px;font-size:12px;color:#cfcfcf;letter-spacing:0.1px">Участники</div>
<svg class="a" style="left:843px;top:991px" width="22" height="19" viewBox="0 0 22 19"><path d="M4,1 H18 C20,1 21,2 21,4 V11 C21,13 20,14 18,14 H9 L4,18.5 V14 H4 C2,14 1,13 1,11 V4 C1,2 2,1 4,1 Z" fill="#b5b5b5"/></svg>
<div class="a" style="left:857px;top:985px;width:15px;height:15px;border-radius:50%;background:#e02828;border:1px solid #1a1a1a"></div>
<div class="t" style="left:861px;top:987px;font-size:11px;font-weight:bold;color:#fff">2</div>
<div class="t" style="left:844.3px;top:1017.0px;font-size:12px;color:#cfcfcf;">Чат</div>
<svg class="a" style="left:950.5px;top:990.5px" width="25" height="19" viewBox="0 0 25 19"><rect x="0" y="0" width="25" height="18.5" rx="3" fill="#23c552"/><path d="M12.5,14 V5.5 M9,8.5 L12.5,5 L16,8.5" fill="none" stroke="#111" stroke-width="1.8"/></svg>
<div class="t" style="left:902.8px;top:1017.0px;font-size:12px;color:#3ad46a;letter-spacing:-0.05px">Демонстрация экрана</div>
<svg class="a" style="left:1062px;top:989px" width="22" height="22" viewBox="0 0 22 22"><circle cx="11" cy="11" r="9.8" fill="none" stroke="#b5b5b5" stroke-width="1.4"/><circle cx="11" cy="11" r="7.3" fill="#b5b5b5"/></svg>
<div class="t" style="left:1053.5px;top:1017.0px;font-size:12px;color:#cfcfcf;letter-spacing:-0.1px">Запись</div>
<svg class="a" style="left:1159.5px;top:989.5px" width="21" height="21" viewBox="0 0 21 21"><rect x="0.5" y="0.5" width="9" height="9" rx="1.8" fill="#b5b5b5"/><rect x="11.5" y="0.5" width="9" height="9" rx="1.8" fill="#b5b5b5"/><rect x="0.5" y="11.5" width="9" height="9" rx="1.8" fill="#b5b5b5"/><rect x="11.5" y="11.5" width="9" height="9" rx="1.8" fill="#b5b5b5"/></svg>
<div class="t" style="left:1121.2px;top:1017.0px;font-size:12px;color:#cfcfcf;letter-spacing:-0.2px">Сессионные залы</div>
<svg class="a" style="left:1258px;top:988px" width="23" height="22" viewBox="0 0 23 22"><circle cx="9.5" cy="12.5" r="9" fill="#b5b5b5"/><circle cx="6.5" cy="10.5" r="1.1" fill="#1a1a1a"/><circle cx="12.5" cy="10.5" r="1.1" fill="#1a1a1a"/><path d="M5.5,14 C7,16.5 12,16.5 13.5,14" fill="none" stroke="#1a1a1a" stroke-width="1.2"/><circle cx="18" cy="5" r="4.5" fill="#1a1a1a"/><path d="M18,1 V9 M14,5 H22" stroke="#b5b5b5" stroke-width="1.4"/></svg>
<div class="t" style="left:1245.1px;top:1017.0px;font-size:12px;color:#cfcfcf;letter-spacing:0px">Реакции</div>
<div class="a" style="left:1801px;top:996px;width:107px;height:27px;background:#0e5fd8;border-radius:6px"></div>
<div class="t" style="left:1811.7px;top:1003.5px;font-size:12px;color:#fff;font-weight:bold;letter-spacing:-0.2px">Выйти из зала</div>


<!-- Taskbar -->
<div class="a" id="task"></div>
<div class="a" style="left:2px;top:1040px;width:51px;height:37px;border:1px solid;border-color:#fff #404040 #404040 #fff;box-shadow:inset -1px -1px #808080, inset 1px 1px #e8e6e0;background:#d4d0c8"></div>
<svg class="a" style="left:4px;top:1050px" width="16" height="15" viewBox="0 0 16 15"><path d="M1,3 C3,1.5 5,1.5 7.5,2.5 L6.5,7 C4,6 2.5,6 0,7.5 Z" fill="#f25022"/><path d="M8.5,2.5 C11,3.5 13,3.5 15.5,2 L14.5,6.5 C12,8 10,8 7.5,7 Z" fill="#7fba00"/><path d="M0,8.5 C2.5,7 4,7 6.5,8 L5.5,12.5 C3,11.5 1.5,11.5 -1,13 Z" fill="#00a4ef"/><path d="M7.5,8 C10,9 12,9 14.5,7.5 L13.5,12 C11,13.5 9,13.5 6.5,12.5 Z" fill="#ffb900"/></svg>
<div class="t" style="left:20.3px;top:1053.0px;font-size:12px;color:#000;font-weight:bold;letter-spacing:-0.3px">Пуск</div>
<div class="a" style="left:60px;top:1042px;width:3px;height:33px;border-left:1px solid #fff;border-right:1px solid #808080"></div>
<svg class="a" style="left:79px;top:1045px" width="33" height="30" viewBox="0 0 33 30"><path d="M1,5 H12 L14,2 H31 V26 H1 Z" fill="#e8c860"/><rect x="5" y="2" width="4" height="3" fill="#40a040"/><rect x="13" y="5" width="4" height="3" fill="#d04030"/><rect x="21" y="5" width="4" height="3" fill="#3090d0"/><path d="M1,9 H32 V27 H1 Z" fill="#f8e8a8"/><path d="M5,29 V18 H28 V29 H23 V22 H10 V29 Z" fill="#70b8e8" stroke="#3a88c8" stroke-width="0.8"/></svg>
<div class="a" style="left:121px;top:1040px;width:159px;height:37px;border:1px solid;border-color:#404040 #fff #fff #404040;box-shadow:inset 1px 1px #808080;background:#fff"></div>
<svg class="a" style="left:126.5px;top:1044px" width="29" height="29" viewBox="0 0 29 29"><rect width="29" height="29" rx="8" fill="#3d8bfd"/><rect x="5.5" y="9.5" width="12" height="10" rx="2" fill="#fff"/><path d="M18.5,13 L23.5,9.5 V19.5 L18.5,16 Z" fill="#fff"/></svg>
<div class="t" style="left:161px;top:1053.0px;font-size:12px;color:#000;font-weight:bold;letter-spacing:-0.35px">Zoom Конференци...</div>
<svg class="a" style="left:291px;top:1043px" width="32" height="31" viewBox="0 0 32 31"><rect x="14" y="3" width="17" height="25" fill="#fff" stroke="#2b579a"/><path d="M17,8 H28 M17,12 H28 M17,16 H28 M17,20 H28 M17,24 H28" stroke="#2b579a"/><path d="M0,4 L19,0 V31 L0,27 Z" fill="#2b579a"/><text x="3" y="20" font-size="11" font-weight="bold" fill="#fff" font-family="Liberation Sans">W</text></svg>
<svg class="a" style="left:342px;top:1043px" width="30" height="31" viewBox="0 0 30 31"><ellipse cx="15" cy="15.5" rx="14.5" ry="15" fill="#e8182a"/><ellipse cx="15" cy="15.5" rx="6" ry="10.5" fill="#d4d0c8"/></svg>
<div class="a" style="left:383px;top:1040px;width:159px;height:37px;border:1px solid;border-color:#fff #404040 #404040 #fff;box-shadow:inset -1px -1px #808080, inset 1px 1px #e8e6e0;background:#d4d0c8"></div>
<svg class="a" style="left:387.5px;top:1043.5px" width="32" height="31" viewBox="0 0 32 31"><circle cx="15" cy="15" r="14.5" fill="#db4437"/><path d="M15,15 L2.4,22.3 A14.5,14.5 0 0 1 15,0.5 Z" fill="#db4437"/><path d="M15,15 L27.6,22.3 A14.5,14.5 0 0 1 2.4,22.3 Z" fill="#0f9d58"/><path d="M15,15 L15,0.5 A14.5,14.5 0 0 1 27.6,22.3 Z" fill="#f4c20d"/><circle cx="15" cy="15" r="6.5" fill="#fff"/><circle cx="15" cy="15" r="5" fill="#4285f4"/><circle cx="24" cy="24" r="7" fill="#333"/><circle cx="24" cy="22" r="3" fill="#c8a890"/></svg>
<div class="t" style="left:422px;top:1053.9px;font-size:11px;color:#000;letter-spacing:0px">Програма_конферен...</div>
<div class="a" style="left:544.5px;top:1040px;width:160.5px;height:37px;border:1px solid;border-color:#fff #404040 #404040 #fff;box-shadow:inset -1px -1px #808080, inset 1px 1px #e8e6e0;background:#d4d0c8"></div>
<svg class="a" style="left:552.5px;top:1043.5px" width="25" height="31" viewBox="0 0 25 31"><path d="M1,1 H18 L24,7 V30 H1 Z" fill="#fff" stroke="#e0302a" stroke-width="1.4"/><path d="M7,16 C10,8 12,5 12.5,8 C13,11 8,18 5,19 C3,20 5,17 10,16 C15,15 19,16 18,17.5 C17,19 13,15 11,11" fill="none" stroke="#e0302a" stroke-width="1.4"/><text x="6" y="27" font-size="6" font-weight="bold" fill="#555" font-family="Liberation Sans">PDF</text></svg>
<div class="t" style="left:584.8px;top:1053.9px;font-size:11px;color:#000;letter-spacing:-0.15px">Timandra · SlidesCarn...</div>
<div class="a" style="left:1725px;top:1042px;width:3px;height:33px;border-left:1px solid #808080;border-right:1px solid #fff"></div>
<div class="t" style="left:1736.7px;top:1051.9px;font-size:11px;color:#000;;letter-spacing:0px">EN</div>
<div class="a" style="left:1756px;top:1046px;width:2px;height:22px;border-left:1px solid #808080;border-right:1px solid #fff"></div>
<div class="a" style="left:1760px;top:1040px;width:158px;height:37px;border:1px solid;border-color:#808080 #fff #fff #808080"></div>
<svg class="a" style="left:1766px;top:1052px" width="8" height="10" viewBox="0 0 8 10"><path d="M1,5 L4,2 L7,5 M1,9 L4,6 L7,9" fill="none" stroke="#000" stroke-width="1.5"/></svg>
<svg class="a" style="left:1782px;top:1051px" width="17" height="16" viewBox="0 0 17 16"><path d="M1,5 H4 L8,1 V15 L4,11 H1 Z" fill="#e8e8e8" stroke="#777"/><path d="M10.5,5 Q12,8 10.5,11 M12.5,3 Q15,8 12.5,13" fill="none" stroke="#777" stroke-width="1"/></svg>
<svg class="a" style="left:1807px;top:1051px" width="17" height="16" viewBox="0 0 17 16"><rect x="5" y="3" width="11" height="9" fill="#999" stroke="#555"/><rect x="8" y="13" width="6" height="2" fill="#777"/><path d="M1,1 H4 V5 H1 Z M2.5,5 V15" fill="none" stroke="#555"/></svg>
<div class="t" style="left:1851.3px;top:1045.9px;font-size:11px;color:#000;;letter-spacing:0px">14:28</div>
<div class="t" style="left:1837.5px;top:1061.9px;font-size:11px;color:#000;letter-spacing:0px">11.11.2021</div>
<svg class="a" style="left:1900.5px;top:1053.5px" width="15" height="12" viewBox="0 0 15 12"><rect width="15" height="12" fill="#1a5fb4"/><rect x="0" y="0" width="15" height="4" fill="#3a8ae0"/><rect x="0" y="10" width="15" height="2" fill="#222"/></svg>


</body></html>
